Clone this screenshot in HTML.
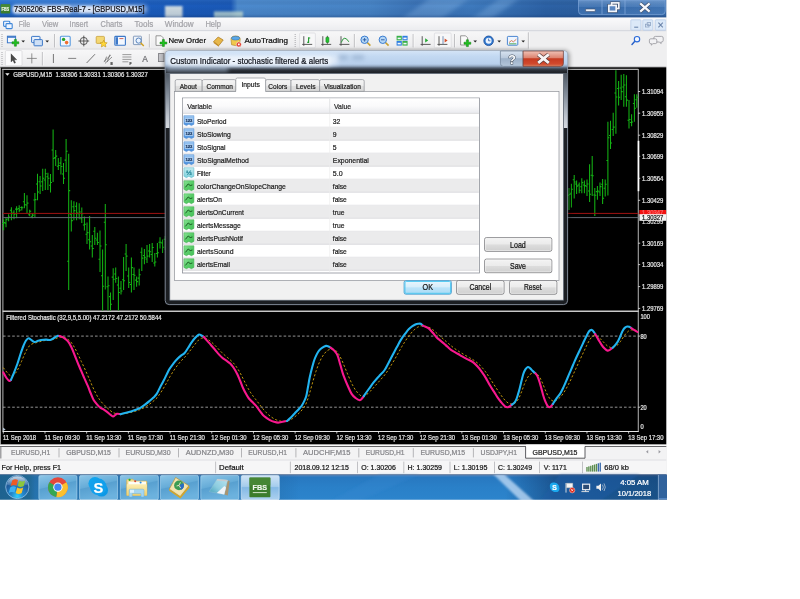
<!DOCTYPE html>
<html><head><meta charset="utf-8"><title>7305206: FBS-Real-7 - [GBPUSD,M15]</title>
<style>
html,body{margin:0;padding:0;background:#fff;width:800px;height:599px;overflow:hidden}
svg{display:block;position:absolute;left:0;top:0;font-family:"Liberation Sans",sans-serif}
text{white-space:pre}
</style></head><body>
<svg width="800" height="599" viewBox="0 0 800 599">
<defs>
<linearGradient id="tbH" x1="0" y1="0" x2="1" y2="0"><stop offset="0" stop-color="#1e66c8"/><stop offset="0.2" stop-color="#1b5ec0"/><stop offset="0.352" stop-color="#1a59b8"/><stop offset="0.362" stop-color="#4c8ace"/><stop offset="0.56" stop-color="#4784c6"/><stop offset="0.63" stop-color="#3a72b6"/><stop offset="0.71" stop-color="#3e7abe"/><stop offset="0.82" stop-color="#2c62a6"/><stop offset="0.9" stop-color="#2d60a0"/><stop offset="1" stop-color="#3a6eae"/></linearGradient>
<linearGradient id="tbV" x1="0" y1="0" x2="0" y2="1"><stop offset="0" stop-color="#1c3866" stop-opacity="0.5"/><stop offset="0.08" stop-color="#6fa6e2" stop-opacity="0.4"/><stop offset="0.22" stop-color="#5f98d8" stop-opacity="0.2"/><stop offset="0.5" stop-color="#000" stop-opacity="0"/><stop offset="0.85" stop-color="#0a2a5a" stop-opacity="0.1"/><stop offset="1" stop-color="#0a2050" stop-opacity="0.35"/></linearGradient>
<filter id="blur2" x="-20%" y="-50%" width="140%" height="200%"><feGaussianBlur stdDeviation="2"/></filter>
<filter id="blur1" x="-20%" y="-50%" width="140%" height="200%"><feGaussianBlur stdDeviation="1"/></filter>
<filter id="blur05" x="-20%" y="-20%" width="140%" height="140%"><feGaussianBlur stdDeviation="0.45"/></filter>
<filter id="blur4" x="-30%" y="-80%" width="160%" height="260%"><feGaussianBlur stdDeviation="4"/></filter>
<linearGradient id="wbG" x1="0" y1="0" x2="0" y2="1"><stop offset="0" stop-color="#9cc0ec" stop-opacity="0.5"/><stop offset="0.45" stop-color="#6f9fd6" stop-opacity="0.38"/><stop offset="0.5" stop-color="#4a80c0" stop-opacity="0.35"/><stop offset="1" stop-color="#5f94d2" stop-opacity="0.4"/></linearGradient>
<linearGradient id="mbG" x1="0" y1="0" x2="0" y2="1"><stop offset="0" stop-color="#fafafb"/><stop offset="0.5" stop-color="#f3f3f5"/><stop offset="1" stop-color="#eaebee"/></linearGradient>
<linearGradient id="tlG" x1="0" y1="0" x2="0" y2="1"><stop offset="0" stop-color="#f7f7f8"/><stop offset="0.5" stop-color="#f1f1f2"/><stop offset="1" stop-color="#ebebed"/></linearGradient>
<linearGradient id="tkV" x1="0" y1="0" x2="0" y2="1"><stop offset="0" stop-color="#54749c"/><stop offset="0.05" stop-color="#4a84c0"/><stop offset="0.1" stop-color="#2878c0"/><stop offset="0.5" stop-color="#2a80c8"/><stop offset="1" stop-color="#2c84cc"/></linearGradient>
<linearGradient id="tkR" x1="0" y1="0" x2="1" y2="0"><stop offset="0" stop-color="#0c2c5c" stop-opacity="0"/><stop offset="0.3" stop-color="#0c2c5c" stop-opacity="0.48"/><stop offset="1" stop-color="#0a2850" stop-opacity="0.56"/></linearGradient>
<linearGradient id="tkL" x1="0" y1="0" x2="1" y2="0"><stop offset="0" stop-color="#1d5f8c" stop-opacity="0.95"/><stop offset="0.115" stop-color="#20668f" stop-opacity="0.92"/><stop offset="0.135" stop-color="#22689a" stop-opacity="0.6"/><stop offset="0.9" stop-color="#2268a0" stop-opacity="0.4"/><stop offset="1" stop-color="#1e5c98" stop-opacity="0"/></linearGradient>
<linearGradient id="tbtn" x1="0" y1="0" x2="0.35" y2="1"><stop offset="0" stop-color="#9acdea"/><stop offset="0.1" stop-color="#84c0e4"/><stop offset="0.48" stop-color="#66acd8"/><stop offset="0.52" stop-color="#58a0d0"/><stop offset="1" stop-color="#6cb2de"/></linearGradient>
<linearGradient id="tbtnA" x1="0" y1="0" x2="0" y2="1"><stop offset="0" stop-color="#e4f1fd" stop-opacity="0.9"/><stop offset="0.45" stop-color="#bcdcf6" stop-opacity="0.85"/><stop offset="0.5" stop-color="#9ccaf0" stop-opacity="0.8"/><stop offset="1" stop-color="#c4e0f8" stop-opacity="0.85"/></linearGradient>
<radialGradient id="orb" cx="0.5" cy="0.9" r="0.85"><stop offset="0" stop-color="#30d0fc"/><stop offset="0.3" stop-color="#2488cc"/><stop offset="0.7" stop-color="#1f5c9c"/><stop offset="1" stop-color="#2c6ca8"/></radialGradient>
<linearGradient id="orbH" x1="0" y1="0" x2="0" y2="1"><stop offset="0" stop-color="#ffffff" stop-opacity="0.75"/><stop offset="1" stop-color="#ffffff" stop-opacity="0.05"/></linearGradient>
<linearGradient id="fold" x1="0" y1="0" x2="0" y2="1"><stop offset="0" stop-color="#fbeeb4"/><stop offset="1" stop-color="#f0d06c"/></linearGradient>
<linearGradient id="npad" x1="1" y1="0" x2="0" y2="1"><stop offset="0" stop-color="#b8e4f0"/><stop offset="0.55" stop-color="#8cccdf"/><stop offset="1" stop-color="#3c9cb8"/></linearGradient>
<linearGradient id="dlgF" x1="0" y1="0" x2="0" y2="1"><stop offset="0" stop-color="#c4d9f1"/><stop offset="0.045" stop-color="#b9d0ec"/><stop offset="0.058" stop-color="#a3b7cf"/><stop offset="0.066" stop-color="#525e6e"/><stop offset="0.076" stop-color="#262b32"/><stop offset="0.09" stop-color="#1e2126"/><stop offset="1" stop-color="#1b1e22"/></linearGradient>
<linearGradient id="dlgS" x1="0" y1="0" x2="0" y2="1"><stop offset="0" stop-color="#4e5762"/><stop offset="0.35" stop-color="#7d8794"/><stop offset="0.8" stop-color="#bfc5ce"/><stop offset="1" stop-color="#d6dae0"/></linearGradient>
<linearGradient id="dlgT" x1="0" y1="0" x2="0" y2="1"><stop offset="0" stop-color="#d4e4f7" stop-opacity="0.95"/><stop offset="0.25" stop-color="#c3d9f2" stop-opacity="0.9"/><stop offset="0.62" stop-color="#b9d0ec" stop-opacity="0.9"/><stop offset="0.72" stop-color="#93a8c2" stop-opacity="0.8"/><stop offset="0.85" stop-color="#4c5868" stop-opacity="0.25"/><stop offset="1" stop-color="#4c5868" stop-opacity="0.0"/></linearGradient>
<linearGradient id="qG" x1="0" y1="0" x2="0" y2="1"><stop offset="0" stop-color="#d9e4f1"/><stop offset="0.45" stop-color="#b9c9dc"/><stop offset="0.5" stop-color="#9db1c9"/><stop offset="1" stop-color="#b4c6da"/></linearGradient>
<linearGradient id="xG" x1="0" y1="0" x2="0" y2="1"><stop offset="0" stop-color="#f0c2b6"/><stop offset="0.45" stop-color="#dc826e"/><stop offset="0.5" stop-color="#c63a20"/><stop offset="0.85" stop-color="#d24a2e"/><stop offset="1" stop-color="#e08a66"/></linearGradient>
<linearGradient id="tabG" x1="0" y1="0" x2="0" y2="1"><stop offset="0" stop-color="#f6f6f6"/><stop offset="0.5" stop-color="#ececec"/><stop offset="0.51" stop-color="#e0e0e0"/><stop offset="1" stop-color="#d8d8d8"/></linearGradient>
<linearGradient id="hdrG" x1="0" y1="0" x2="0" y2="1"><stop offset="0" stop-color="#ffffff"/><stop offset="0.5" stop-color="#fafafb"/><stop offset="1" stop-color="#e9eaee"/></linearGradient>
<linearGradient id="icI" x1="0" y1="0" x2="0" y2="1"><stop offset="0" stop-color="#a4ccf4"/><stop offset="0.5" stop-color="#6aa8e8"/><stop offset="1" stop-color="#4a8edc"/></linearGradient>
<linearGradient id="icD" x1="0" y1="0" x2="0" y2="1"><stop offset="0" stop-color="#c4ecf0"/><stop offset="1" stop-color="#7cd0dc"/></linearGradient>
<linearGradient id="icB" x1="0" y1="0" x2="1" y2="1"><stop offset="0" stop-color="#8ce498"/><stop offset="0.5" stop-color="#58cc68"/><stop offset="1" stop-color="#44c058"/></linearGradient>
<linearGradient id="btnG" x1="0" y1="0" x2="0" y2="1"><stop offset="0" stop-color="#f4f4f4"/><stop offset="0.48" stop-color="#ebebeb"/><stop offset="0.52" stop-color="#dddddd"/><stop offset="1" stop-color="#cfcfcf"/></linearGradient>
<linearGradient id="btnD" x1="0" y1="0" x2="0" y2="1"><stop offset="0" stop-color="#eaf6fd"/><stop offset="0.48" stop-color="#d6eefb"/><stop offset="0.52" stop-color="#bce4fa"/><stop offset="1" stop-color="#a9daf4"/></linearGradient>
<filter id="softall" x="-10" y="-10" width="820" height="620" filterUnits="userSpaceOnUse" color-interpolation-filters="sRGB"><feGaussianBlur stdDeviation="0.38"/></filter>
<clipPath id="scr"><rect x="0" y="0" width="667.00" height="499.80"/></clipPath>
</defs>
<rect x="0" y="0" width="800" height="599" fill="#ffffff"/>
<g clip-path="url(#scr)"><g filter="url(#softall)">
<g id="titlebar">
<rect x="-6.00" y="-6.00" width="673.00" height="23.60" fill="url(#tbH)" />
<g filter="url(#blur2)">
<rect x="-6.00" y="-6.00" width="106.00" height="10.00" fill="#3f8ce6" opacity="0.6"/>
</g>
<g filter="url(#blur1)">
<rect x="165.00" y="6.00" width="17.50" height="12.00" fill="#eef2ea" opacity="0.85"/>
<rect x="214.00" y="11.50" width="29.00" height="7.00" fill="#d4ead8" opacity="0.75"/>
</g>
<g filter="url(#blur2)" opacity="0.35"><path d="M430 -2 L470 -2 L440 20 L400 20Z" fill="#8fc0f0"/><path d="M500 -2 L520 -2 L490 20 L470 20Z" fill="#8fc0f0"/></g>
<rect x="-6.00" y="-6.00" width="673.00" height="23.60" fill="url(#tbV)" />
<g filter="url(#blur2)" opacity="0.62">
<rect x="12.00" y="5.00" width="135.00" height="8.50" fill="#e8f0fb" rx="4" />
</g>
<g filter="url(#blur1)" opacity="0.72">
<rect x="13.00" y="5.50" width="58.00" height="8.00" fill="#ffffff" rx="3" />
<rect x="78.00" y="6.00" width="60.00" height="7.00" fill="#f4f8ff" rx="3" />
</g>
<rect x="0.60" y="4.20" width="9.60" height="9.40" fill="#3b7d2c" rx="0.8" />
<rect x="0.60" y="4.20" width="9.60" height="4.00" fill="#4c8f39" rx="0.8" opacity="0.7"/>
<text x="1.40" y="11.00" font-size="4.60" fill="#e8f2e2" textLength="7.80" lengthAdjust="spacingAndGlyphs" font-weight="bold" stroke="#e8f2e2" stroke-width="0.22" >FBS</text>
<text x="14.00" y="12.00" font-size="8.80" fill="#0c0c14" textLength="130.50" lengthAdjust="spacingAndGlyphs" stroke="#0c0c14" stroke-width="0.22" >7305206: FBS-Real-7 - [GBPUSD,M15]</text>
<path d="M578.5 0 H665.2 V11.2 Q665.2 14.6 661.8 14.6 H582 Q578.5 14.6 578.5 11.2 Z" fill="url(#wbG)" stroke="#7fa6da" stroke-width="0.7"/>
<line x1="602.00" y1="0.00" x2="602.00" y2="14.40" stroke="#86acde" stroke-width="0.7" />
<line x1="625.00" y1="0.00" x2="625.00" y2="14.40" stroke="#86acde" stroke-width="0.7" />
<rect x="585.60" y="9.00" width="9.60" height="2.60" fill="#f4f6fa" stroke="#3a4a66" stroke-width="0.6" rx="0.5" />
<g fill="none" stroke="#3a4a66" stroke-width="2.8"><rect x="611.6" y="2.9" width="7.2" height="5.6"/><rect x="608.8" y="5.4" width="7.4" height="6.0"/></g>
<g fill="none" stroke="#f4f6fa" stroke-width="1.7"><rect x="611.6" y="2.9" width="7.2" height="5.6"/></g><rect x="608.8" y="5.4" width="7.4" height="6.0" fill="#5a86c0" stroke="#f4f6fa" stroke-width="1.7"/>
<g stroke-linecap="butt"><path d="M640.2 3.4 L649.6 11.6 M649.6 3.4 L640.2 11.6" stroke="#3a4a66" stroke-width="3.6" fill="none"/><path d="M640.2 3.4 L649.6 11.6 M649.6 3.4 L640.2 11.6" stroke="#f6f8fc" stroke-width="2.3" fill="none"/></g>
</g>
<g id="menubar">
<rect x="-6.00" y="17.60" width="673.00" height="13.60" fill="url(#mbG)" />
<line x1="-6.00" y1="31.00" x2="667.00" y2="31.00" stroke="#b9bec8" stroke-width="0.8" />
<g fill="#eef5ff" stroke="#3f86d8" stroke-width="1.1"><rect x="3.6" y="21.2" width="6.2" height="5.2" rx="0.8"/><rect x="6.0" y="23.6" width="6.2" height="5.0" rx="0.8"/></g>
<text x="18.80" y="27.30" font-size="8.30" fill="#a3a3a8" textLength="11.20" lengthAdjust="spacingAndGlyphs" stroke="#a3a3a8" stroke-width="0.22" >File</text>
<text x="42.00" y="27.30" font-size="8.30" fill="#a3a3a8" textLength="16.20" lengthAdjust="spacingAndGlyphs" stroke="#a3a3a8" stroke-width="0.22" >View</text>
<text x="69.60" y="27.30" font-size="8.30" fill="#a3a3a8" textLength="18.60" lengthAdjust="spacingAndGlyphs" stroke="#a3a3a8" stroke-width="0.22" >Insert</text>
<text x="100.60" y="27.30" font-size="8.30" fill="#a3a3a8" textLength="21.80" lengthAdjust="spacingAndGlyphs" stroke="#a3a3a8" stroke-width="0.22" >Charts</text>
<text x="134.60" y="27.30" font-size="8.30" fill="#a3a3a8" textLength="18.80" lengthAdjust="spacingAndGlyphs" stroke="#a3a3a8" stroke-width="0.22" >Tools</text>
<text x="164.80" y="27.30" font-size="8.30" fill="#a3a3a8" textLength="28.80" lengthAdjust="spacingAndGlyphs" stroke="#a3a3a8" stroke-width="0.22" >Window</text>
<text x="205.40" y="27.30" font-size="8.30" fill="#a3a3a8" textLength="15.60" lengthAdjust="spacingAndGlyphs" stroke="#a3a3a8" stroke-width="0.22" >Help</text>
<rect x="630.80" y="19.80" width="10.20" height="10.40" fill="#dce9f8" stroke="#b3c9e6" stroke-width="0.7" rx="0.8" />
<rect x="642.80" y="19.80" width="10.00" height="10.40" fill="#dce9f8" stroke="#b3c9e6" stroke-width="0.7" rx="0.8" />
<rect x="655.20" y="19.80" width="10.80" height="10.40" fill="#dce9f8" stroke="#b3c9e6" stroke-width="0.7" rx="0.8" />
<line x1="634.20" y1="27.20" x2="638.20" y2="27.20" stroke="#6d86ac" stroke-width="1.1" />
<g fill="none" stroke="#8ea3c2" stroke-width="0.8"><rect x="647.2" y="22.6" width="3.4" height="2.8"/><rect x="645.6" y="24.2" width="3.4" height="2.8"/></g>
<path d="M658.4 22.6 L662.8 27.4 M662.8 22.6 L658.4 27.4" stroke="#6d86ac" stroke-width="1.1" fill="none"/>
</g>
<g id="toolbars">
<rect x="-6.00" y="31.40" width="673.00" height="36.00" fill="#efeff0" />
<rect x="-6.00" y="31.40" width="535.00" height="18.00" fill="url(#tlG)" />
<line x1="-6.00" y1="49.20" x2="529.00" y2="49.20" stroke="#c9c9cc" stroke-width="0.7" />
<rect x="-6.00" y="49.60" width="535.00" height="17.60" fill="url(#tlG)" />
<line x1="-6.00" y1="66.90" x2="667.00" y2="66.90" stroke="#a9a9ad" stroke-width="0.8" />
<line x1="2.00" y1="34.00" x2="2.00" y2="47.40" stroke="#b4b4b8" stroke-width="1.2" stroke-dasharray="1 1"/>
<line x1="2.00" y1="52.00" x2="2.00" y2="65.00" stroke="#b4b4b8" stroke-width="1.2" stroke-dasharray="1 1"/>
<g><rect x="7.4" y="36.2" width="8.2" height="6.6" fill="#f3f8ff" stroke="#3c78c8" stroke-width="1"/><rect x="7.4" y="36.2" width="8.2" height="1.6" fill="#3c78c8"/><path d="M12 41.8 h2.4 v-2.4 h2 v2.4 h2.4 v2 h-2.4 v2.4 h-2 v-2.4 h-2.4 z" fill="#1fc21f" stroke="#0c7a0c" stroke-width="0.5"/></g>
<path d="M21.40 40.40 h3.6 l-1.8 2.2 z" fill="#222"/>
<g fill="#eaf2fc" stroke="#3c78c8" stroke-width="1"><rect x="31.6" y="36.4" width="8.4" height="6.2" rx="0.6"/><rect x="34.0" y="39.6" width="8.4" height="6.2" rx="0.6" fill="#cfe0f6"/></g>
<path d="M45.40 40.40 h3.6 l-1.8 2.2 z" fill="#222"/>
<line x1="54.60" y1="34.00" x2="54.60" y2="47.40" stroke="#a8a8ac" stroke-width="0.8" />
<line x1="55.40" y1="34.00" x2="55.40" y2="47.40" stroke="#ffffff" stroke-width="0.6" />
<g><rect x="60.4" y="36.2" width="9.8" height="9.8" rx="1" fill="#f1f7ff" stroke="#5a9be0" stroke-width="1.1"/><circle cx="63.6" cy="39.4" r="1.7" fill="#28a428"/><circle cx="66.6" cy="42.6" r="1.8" fill="#f07030"/></g>
<g fill="none" stroke="#4a4a4a" stroke-width="0.9"><circle cx="83.8" cy="41" r="3.6"/><path d="M83.8 35.6 v10.8 M78.4 41 h10.8"/></g>
<g><rect x="96.2" y="36.4" width="8.2" height="7" rx="0.8" fill="#f4d873" stroke="#c49a2c" stroke-width="0.7"/><path d="M103.6 40.2 l1.1 2.3 2.5 0.3 -1.8 1.7 0.5 2.5 -2.3 -1.2 -2.3 1.2 0.5 -2.5 -1.8 -1.7 2.5 -0.3z" fill="#ffd83a" stroke="#b8860b" stroke-width="0.5"/></g>
<g><rect x="114.8" y="36.4" width="10.6" height="8.8" rx="0.8" fill="#f3f8ff" stroke="#3c78c8" stroke-width="1.1"/><rect x="115.6" y="37.2" width="2.4" height="7.4" fill="#3c78c8"/><path d="M119.4 38.6 h4" stroke="#c03a30" stroke-width="0.8"/></g>
<g><rect x="133.4" y="36.2" width="8" height="8.4" rx="0.6" fill="#eef3fa" stroke="#7a94b8" stroke-width="0.9"/><circle cx="138.6" cy="40.6" r="2.6" fill="#e8f2ff" stroke="#4a78b4" stroke-width="0.9"/><path d="M140.6 42.8 l3.2 3.2" stroke="#d0a020" stroke-width="1.4"/></g>
<line x1="149.40" y1="34.00" x2="149.40" y2="47.40" stroke="#a8a8ac" stroke-width="0.8" />
<line x1="150.20" y1="34.00" x2="150.20" y2="47.40" stroke="#ffffff" stroke-width="0.6" />
<g><path d="M156 35.8 h5.2 l2 2 v7.6 h-7.2 z" fill="#fafafa" stroke="#707070" stroke-width="0.7"/><path d="M160 42 h2.4 v-2.4 h2 v2.4 h2.4 v2 h-2.4 v2.4 h-2 v-2.4 h-2.4 z" fill="#1fc21f" stroke="#0c7a0c" stroke-width="0.5"/></g>
<text x="168.40" y="42.50" font-size="7.60" fill="#101010" textLength="37.60" lengthAdjust="spacingAndGlyphs" stroke="#101010" stroke-width="0.22" >New Order</text>
<g><path d="M213.6 41.6 l4.6 -4.6 5 3 -4.4 5.6 z" fill="#e8b84a" stroke="#a87416" stroke-width="0.7"/><path d="M213.6 41.6 l5.2 4 v1.2 l-5.2 -3.8 z" fill="#c48a20"/></g>
<g><path d="M231 39.4 q0 -3.4 4.6 -3.4 q4.6 0 4.6 3.4 l-0.6 5.4 q-4 1.6 -8 0z" fill="#f0c84a" stroke="#a88020" stroke-width="0.6"/><ellipse cx="235.6" cy="38.2" rx="4.2" ry="1.9" fill="#5aa8e8" stroke="#2c6cb0" stroke-width="0.5"/><circle cx="238.8" cy="44.4" r="2.5" fill="#e03020" stroke="#fff" stroke-width="0.5"/><rect x="237.9" y="43.5" width="1.8" height="1.8" fill="#fff"/></g>
<text x="244.40" y="42.50" font-size="7.60" fill="#101010" textLength="43.60" lengthAdjust="spacingAndGlyphs" stroke="#101010" stroke-width="0.22" >AutoTrading</text>
<line x1="295.20" y1="34.00" x2="295.20" y2="47.40" stroke="#b4b4b8" stroke-width="1.2" stroke-dasharray="1 1"/>
<rect x="299.60" y="33.00" width="15.80" height="14.80" fill="#f7f7f8" stroke="#d4d4d8" stroke-width="0.6" rx="1" />
<path d="M303.80 36.20 v9.6 M302.20 44.4 h10" stroke="#4a4a4a" stroke-width="0.9" fill="none"/>
<path d="M308.6 37.2 v5.8 M308.6 38 h1.6 M308.6 42.2 h-1.6" stroke="#1f9a2c" stroke-width="1.1" fill="none"/>
<path d="M322.80 36.20 v9.6 M321.20 44.4 h10" stroke="#4a4a4a" stroke-width="0.9" fill="none"/>
<path d="M327.4 35.8 v8" stroke="#222" stroke-width="0.7"/><rect x="325.9" y="37.2" width="3" height="5.2" rx="0.6" fill="#22c232" stroke="#157a15" stroke-width="0.5"/>
<path d="M341.00 36.20 v9.6 M339.40 44.4 h10" stroke="#4a4a4a" stroke-width="0.9" fill="none"/>
<path d="M341.2 42.6 q1.6 -4.6 3.6 -4.4 q2 0.2 4 3.6" stroke="#2c9a3c" stroke-width="1.0" fill="none"/>
<line x1="354.40" y1="34.00" x2="354.40" y2="47.40" stroke="#a8a8ac" stroke-width="0.8" />
<line x1="355.20" y1="34.00" x2="355.20" y2="47.40" stroke="#ffffff" stroke-width="0.6" />
<g><path d="M367.00 42.20 l3.4 3.4" stroke="#c8a030" stroke-width="1.6"/><circle cx="364.60" cy="39.80" r="3.7" fill="#b4d6f6" stroke="#3a7cd0" stroke-width="1"/><path d="M362.80 39.80 h3.6" stroke="#2a5aa0" stroke-width="0.9"/>
<path d="M364.60 38.00 v3.6" stroke="#2a5aa0" stroke-width="0.9"/>
</g>
<g><path d="M385.20 42.20 l3.4 3.4" stroke="#c8a030" stroke-width="1.6"/><circle cx="382.80" cy="39.80" r="3.7" fill="#b4d6f6" stroke="#3a7cd0" stroke-width="1"/><path d="M381.00 39.80 h3.6" stroke="#2a5aa0" stroke-width="0.9"/>
</g>
<g stroke-width="0"><rect x="396.6" y="35.8" width="5.2" height="4.6" fill="#38b048"/><rect x="402.4" y="35.8" width="5.2" height="4.6" fill="#2f7ee0"/><rect x="396.6" y="41" width="5.2" height="4.6" fill="#2f7ee0"/><rect x="402.4" y="41" width="5.2" height="4.6" fill="#38b048"/><g fill="#f4f8fc"><rect x="397.6" y="37.6" width="3.2" height="1.6"/><rect x="403.4" y="37.6" width="3.2" height="1.6"/><rect x="397.6" y="42.8" width="3.2" height="1.6"/><rect x="403.4" y="42.8" width="3.2" height="1.6"/></g></g>
<line x1="413.20" y1="34.00" x2="413.20" y2="47.40" stroke="#a8a8ac" stroke-width="0.8" />
<line x1="414.00" y1="34.00" x2="414.00" y2="47.40" stroke="#ffffff" stroke-width="0.6" />
<path d="M422.20 36.20 v9.6 M420.60 44.4 h10" stroke="#4a4a4a" stroke-width="0.9" fill="none"/>
<path d="M425.2 38.2 l3 2.2 -3 2.2z" fill="#22a832"/>
<rect x="434.40" y="33.00" width="16.80" height="14.80" fill="#f7f7f8" stroke="#d4d4d8" stroke-width="0.6" rx="1" />
<path d="M439.00 36.20 v9.6 M437.40 44.4 h10" stroke="#4a4a4a" stroke-width="0.9" fill="none"/>
<path d="M443.0 36.2 v8" stroke="#6a86b0" stroke-width="0.9"/><path d="M444.6 38.4 l3 2 -3 2z" fill="#d4502c"/>
<line x1="454.60" y1="34.00" x2="454.60" y2="47.40" stroke="#a8a8ac" stroke-width="0.8" />
<line x1="455.40" y1="34.00" x2="455.40" y2="47.40" stroke="#ffffff" stroke-width="0.6" />
<g><path d="M460.6 35.8 h5 l2 2 v7.2 h-7 z" fill="#fafafa" stroke="#707070" stroke-width="0.7"/><path d="M464 42.2 h2.4 v-2.4 h2 v2.4 h2.4 v2 h-2.4 v2.4 h-2 v-2.4 h-2.4 z" fill="#1fc21f" stroke="#0c7a0c" stroke-width="0.5"/></g>
<path d="M473.40 40.40 h3.6 l-1.8 2.2 z" fill="#222"/>
<g><circle cx="488.6" cy="40.8" r="4.8" fill="#2f78d0" stroke="#1a4c98" stroke-width="0.8"/><circle cx="488.6" cy="40.8" r="3" fill="#eaf3ff"/><path d="M488.6 38.6 v2.2 h1.8" stroke="#1a4c98" stroke-width="0.7" fill="none"/></g>
<path d="M497.40 40.40 h3.6 l-1.8 2.2 z" fill="#222"/>
<g><rect x="507.4" y="36.4" width="10.4" height="8.8" rx="0.8" fill="#eef5ff" stroke="#4a86d0" stroke-width="1"/><path d="M509 42.6 l2.4 -2 2 1.2 3 -2.6" stroke="#d06030" stroke-width="0.8" fill="none"/><path d="M509 43.8 h7.4" stroke="#38a038" stroke-width="0.8"/></g>
<path d="M521.40 40.40 h3.6 l-1.8 2.2 z" fill="#222"/>
<line x1="528.40" y1="32.40" x2="528.40" y2="48.40" stroke="#a8a8ac" stroke-width="0.8" />
<line x1="529.20" y1="32.40" x2="529.20" y2="48.40" stroke="#ffffff" stroke-width="0.6" />
<g><path d="M634.6 41.6 l-2.6 2.8" stroke="#2a62c8" stroke-width="1.5" stroke-linecap="round"/><circle cx="637.0" cy="39.2" r="2.7" fill="#f4f8ff" stroke="#2a6ad8" stroke-width="1.1"/></g>
<g fill="#f2f2f4" stroke="#8a8a90" stroke-width="0.7"><path d="M655.4 36.4 h6.2 q1.6 0 1.6 1.6 v2.4 q0 1.6 -1.6 1.6 h-0.8 l0.4 1.6 -2 -1.6 h-3.8 q-1.6 0 -1.6 -1.6 v-2.4 q0 -1.6 1.6 -1.6z"/><path d="M650.8 38.8 h4.6 q1.4 0 1.4 1.4 v2 q0 1.4 -1.4 1.4 h-2.4 l-1.8 1.6 0.2 -1.6 h-0.6 q-1.4 0 -1.4 -1.4 v-2 q0 -1.4 1.4 -1.4z"/></g>
<rect x="5.40" y="50.60" width="16.60" height="15.20" fill="#fbfbfc" stroke="#d0d0d4" stroke-width="0.6" rx="1" />
<path d="M11 53.8 v8.2 l1.9 -1.7 1.4 3 1.3 -0.6 -1.4 -2.9 h2.6z" fill="#4a4a4a" stroke="#2a2a2a" stroke-width="0.3"/>
<path d="M31.8 53.4 v10 M26.8 58.4 h10" stroke="#777" stroke-width="0.8" fill="none"/>
<line x1="42.40" y1="52.00" x2="42.40" y2="65.40" stroke="#a8a8ac" stroke-width="0.8" />
<line x1="43.20" y1="52.00" x2="43.20" y2="65.40" stroke="#ffffff" stroke-width="0.6" />
<line x1="53.40" y1="54.00" x2="53.40" y2="63.00" stroke="#666" stroke-width="0.9" />
<line x1="68.20" y1="58.40" x2="76.20" y2="58.40" stroke="#777" stroke-width="0.9" />
<line x1="86.60" y1="63.00" x2="95.00" y2="54.20" stroke="#666" stroke-width="0.9" />
<g stroke="#666" stroke-width="0.7" fill="none"><path d="M103.8 61.6 l7 -6.4 M105 63.4 l7 -6.4 M106.6 56.6 l-2 5.4 M109.8 54.6 l-2.6 7.4"/></g>
<text x="110.60" y="64.60" font-size="3.60" fill="#444" font-weight="bold" stroke="#444" stroke-width="0.22" >E</text>
<g stroke="#777" stroke-width="0.7" fill="none"><path d="M122.4 54.6 h9 M122.4 57 h9 M122.4 59.4 h9 M122.4 61.8 h6"/></g>
<text x="129.60" y="65.00" font-size="3.40" fill="#444" font-weight="bold" stroke="#444" stroke-width="0.22" >F</text>
<text x="142.20" y="62.00" font-size="8.40" fill="#6e6e72" textLength="5.60" lengthAdjust="spacingAndGlyphs" stroke="#6e6e72" stroke-width="0.22" >A</text>
<rect x="158.40" y="53.60" width="5.60" height="8.00" fill="#c4c4c8" stroke="#77777c" stroke-width="0.8" />
</g>
<g id="chart">
<rect x="-6.00" y="67.30" width="673.00" height="377.50" fill="#000000" />
<line x1="0.45" y1="67.40" x2="0.45" y2="444.60" stroke="#a4a4a4" stroke-width="1.0" />
<line x1="2.80" y1="69.00" x2="2.80" y2="431.60" stroke="#6e6e6e" stroke-width="1.7" />
<line x1="2.20" y1="69.40" x2="638.30" y2="69.40" stroke="#b0b0b0" stroke-width="1.1" />
<line x1="638.30" y1="69.00" x2="638.30" y2="431.60" stroke="#a6a6a6" stroke-width="1.1" />
<line x1="638.50" y1="140.80" x2="638.50" y2="191.20" stroke="#ffffff" stroke-width="1.7" />
<line x1="2.60" y1="311.20" x2="638.80" y2="311.20" stroke="#c8c8c8" stroke-width="1.4" />
<line x1="2.60" y1="431.50" x2="638.80" y2="431.50" stroke="#e4e4e4" stroke-width="1.1" />
<g stroke="#14b414" stroke-width="1.05" fill="none">
<path d="M3.6 219.2V230.2M3.6 223.5h-1.5M3.6 222.4h1.5M6.0 217.2V227.2M6.0 223.1h-1.5M6.0 219.6h1.5M8.6 214.2V221.2M8.6 217.9h-1.5M8.6 217.1h1.5M11.4 207.2V220.2M11.4 210.3h-1.5M11.4 213.8h1.5M14.0 210.2V219.2M14.0 212.2h-1.5M14.0 214.3h1.5M16.6 206.2V218.2M16.6 209.1h-1.5M16.6 209.3h1.5M19.2 205.2V212.2M19.2 208.4h-1.5M19.2 210.1h1.5M21.8 206.2V210.6M21.8 207.4h-1.5M21.8 207.7h1.5M24.4 193.1V208.2M24.4 201.8h-1.5M24.4 204.7h1.5M27.0 195.2V213.2M27.0 205.0h-1.5M27.0 203.1h1.5M29.7 209.8V216.2M29.7 214.8h-1.5M29.7 211.3h1.5M32.3 213.2V218.2M32.3 216.8h-1.5M32.3 215.1h1.5M34.9 193.1V217.2M34.9 200.0h-1.5M34.9 199.6h1.5M37.5 173.7V200.2M37.5 183.9h-1.5M37.5 192.0h1.5M40.1 176.1V194.1M40.1 181.7h-1.5M40.1 186.0h1.5M42.7 168.7V191.1M42.7 181.8h-1.5M42.7 178.2h1.5M45.3 168.7V190.1M45.3 180.0h-1.5M45.3 173.8h1.5M47.9 172.7V190.1M47.9 176.8h-1.5M47.9 178.3h1.5M50.5 174.1V192.5M50.5 185.3h-1.5M50.5 182.5h1.5M53.1 129.4V182.1M53.1 149.9h-1.5M53.1 158.5h1.5M55.7 150.0V166.1M55.7 157.6h-1.5M55.7 156.1h1.5M58.3 158.0V170.1M58.3 166.2h-1.5M58.3 165.5h1.5M60.9 157.0V174.5M60.9 163.1h-1.5M60.9 166.5h1.5M63.5 163.0V184.1M63.5 173.9h-1.5M63.5 178.3h1.5M66.1 139.0V172.1M66.1 160.1h-1.5M66.1 151.3h1.5M68.7 153.7V290.1M68.7 261.2h-1.5M68.7 190.6h1.5M71.3 200.2V231.4M71.3 214.3h-1.5M71.3 220.6h1.5M73.9 201.2V220.2M73.9 206.7h-1.5M73.9 210.6h1.5M76.6 202.2V220.2M76.6 206.2h-1.5M76.6 213.0h1.5M79.2 203.2V219.2M79.2 213.7h-1.5M79.2 211.9h1.5M81.8 207.6V223.0M81.8 218.8h-1.5M81.8 213.6h1.5M84.4 216.4V230.4M84.4 225.0h-1.5M84.4 224.2h1.5M87.0 222.4V244.0M87.0 234.2h-1.5M87.0 232.6h1.5M89.6 216.0V249.6M89.6 239.7h-1.5M89.6 241.8h1.5M92.3 235.0V257.5M92.3 245.9h-1.5M92.3 248.5h1.5M94.8 227.0V245.0M94.8 231.3h-1.5M94.8 238.2h1.5M97.4 232.8V245.0M97.4 240.0h-1.5M97.4 242.5h1.5M100.0 230.5V272.0M100.0 259.3h-1.5M100.0 245.9h1.5M102.6 249.6V310.4M102.6 275.8h-1.5M102.6 286.2h1.5M105.3 204.0V289.4M105.3 222.2h-1.5M105.3 244.7h1.5M108.0 276.6V310.4M108.0 286.8h-1.5M108.0 285.7h1.5M110.5 292.4V310.4M110.5 296.6h-1.5M110.5 304.3h1.5M113.2 268.3V300.0M113.2 277.1h-1.5M113.2 279.3h1.5M115.7 267.4V282.7M115.7 274.0h-1.5M115.7 278.5h1.5M118.4 276.6V310.4M118.4 285.0h-1.5M118.4 292.5h1.5M121.0 281.0V294.6M121.0 288.2h-1.5M121.0 290.9h1.5M123.6 257.0V290.0M123.6 279.8h-1.5M123.6 280.7h1.5M126.1 244.0V271.0M126.1 253.9h-1.5M126.1 256.1h1.5M128.7 267.6V287.9M128.7 276.0h-1.5M128.7 282.4h1.5M131.4 257.5V292.4M131.4 284.5h-1.5M131.4 267.6h1.5M134.0 267.6V290.0M134.0 274.4h-1.5M134.0 275.2h1.5M136.6 276.6V286.8M136.6 280.1h-1.5M136.6 281.6h1.5M139.2 268.8V285.6M139.2 278.1h-1.5M139.2 274.8h1.5M141.8 247.4V271.0M141.8 252.2h-1.5M141.8 258.1h1.5M144.4 249.0V264.3M144.4 255.4h-1.5M144.4 257.3h1.5M147.0 245.0V263.0M147.0 258.9h-1.5M147.0 256.1h1.5M149.6 244.0V257.5M149.6 250.9h-1.5M149.6 251.7h1.5M152.2 243.0V262.0M152.2 254.5h-1.5M152.2 247.4h1.5M154.8 253.0V266.5M154.8 263.0h-1.5M154.8 262.0h1.5M157.4 243.0V257.5M157.4 253.5h-1.5M157.4 252.8h1.5M160.0 237.3V248.5M160.0 242.2h-1.5M160.0 242.2h1.5M162.6 239.5V253.0M162.6 243.0h-1.5M162.6 247.3h1.5M165.2 236.0V250.0M165.2 239.3h-1.5M165.2 239.4h1.5M569.0 188.0V210.0M569.0 195.2h-1.5M569.0 194.5h1.5M571.4 183.7V207.4M571.4 193.3h-1.5M571.4 189.2h1.5M574.2 175.0V198.6M574.2 179.7h-1.5M574.2 181.9h1.5M576.6 180.4V194.0M576.6 183.9h-1.5M576.6 186.1h1.5M579.2 182.6V193.2M579.2 184.9h-1.5M579.2 190.3h1.5M581.8 178.3V193.2M581.8 186.8h-1.5M581.8 182.6h1.5M584.4 180.4V193.2M584.4 184.9h-1.5M584.4 185.6h1.5M587.0 179.4V196.0M587.0 186.3h-1.5M587.0 183.9h1.5M589.6 164.2V202.0M589.6 191.0h-1.5M589.6 194.3h1.5M592.2 156.1V196.0M592.2 175.2h-1.5M592.2 175.7h1.5M594.8 188.0V216.0M594.8 195.0h-1.5M594.8 195.3h1.5M597.4 186.0V199.8M597.4 191.6h-1.5M597.4 191.0h1.5M600.0 182.6V196.0M600.0 191.9h-1.5M600.0 186.6h1.5M602.6 179.0V204.0M602.6 184.3h-1.5M602.6 198.3h1.5M605.2 179.4V196.5M605.2 188.2h-1.5M605.2 184.3h1.5M607.9 121.8V195.4M607.9 160.5h-1.5M607.9 137.7h1.5M610.5 120.8V149.0M610.5 135.4h-1.5M610.5 143.0h1.5M613.2 112.7V136.0M613.2 129.4h-1.5M613.2 127.1h1.5M615.9 70.2V133.8M615.9 92.9h-1.5M615.9 96.9h1.5M618.6 81.0V105.6M618.6 88.4h-1.5M618.6 97.3h1.5M621.2 74.8V100.0M621.2 87.9h-1.5M621.2 91.6h1.5M623.8 74.0V106.7M623.8 87.0h-1.5M623.8 84.9h1.5M626.4 75.2V106.7M626.4 96.8h-1.5M626.4 100.1h1.5M629.0 100.0V128.4M629.0 120.2h-1.5M629.0 119.4h1.5M631.6 114.3V126.2M631.6 122.5h-1.5M631.6 122.0h1.5M634.4 94.3V121.8M634.4 103.5h-1.5M634.4 108.3h1.5M636.8 94.3V107.7M636.8 99.8h-1.5M636.8 97.2h1.5"/>
</g>
<line x1="3.00" y1="213.40" x2="638.30" y2="213.40" stroke="#a01212" stroke-width="1.0" />
<line x1="3.00" y1="217.60" x2="638.30" y2="217.60" stroke="#646a74" stroke-width="1.0" />
<path d="M5.2 73.2 h4.4 l-2.2 2.6z" fill="#f0f0f0"/>
<text x="13.20" y="77.40" font-size="6.90" fill="#e6e6e6" textLength="134.60" lengthAdjust="spacingAndGlyphs" stroke="#e6e6e6" stroke-width="0.22" >GBPUSD,M15  1.30306 1.30331 1.30306 1.30327</text>
<text x="642.00" y="224.00" font-size="6.50" fill="#d8d8d8" textLength="21.40" lengthAdjust="spacingAndGlyphs" stroke="#d8d8d8" stroke-width="0.22" >1.30299</text>
<line x1="638.30" y1="91.50" x2="640.20" y2="91.50" stroke="#f0f0f0" stroke-width="0.8" />
<text x="642.00" y="93.80" font-size="6.50" fill="#e4e4e4" textLength="21.40" lengthAdjust="spacingAndGlyphs" stroke="#e4e4e4" stroke-width="0.22" >1.31094</text>
<line x1="638.30" y1="113.20" x2="640.20" y2="113.20" stroke="#f0f0f0" stroke-width="0.8" />
<text x="642.00" y="115.50" font-size="6.50" fill="#e4e4e4" textLength="21.40" lengthAdjust="spacingAndGlyphs" stroke="#e4e4e4" stroke-width="0.22" >1.30959</text>
<line x1="638.30" y1="135.20" x2="640.20" y2="135.20" stroke="#f0f0f0" stroke-width="0.8" />
<text x="642.00" y="137.50" font-size="6.50" fill="#e4e4e4" textLength="21.40" lengthAdjust="spacingAndGlyphs" stroke="#e4e4e4" stroke-width="0.22" >1.30829</text>
<line x1="638.30" y1="156.30" x2="640.20" y2="156.30" stroke="#f0f0f0" stroke-width="0.8" />
<text x="642.00" y="158.60" font-size="6.50" fill="#e4e4e4" textLength="21.40" lengthAdjust="spacingAndGlyphs" stroke="#e4e4e4" stroke-width="0.22" >1.30699</text>
<line x1="638.30" y1="178.30" x2="640.20" y2="178.30" stroke="#f0f0f0" stroke-width="0.8" />
<text x="642.00" y="180.60" font-size="6.50" fill="#e4e4e4" textLength="21.40" lengthAdjust="spacingAndGlyphs" stroke="#e4e4e4" stroke-width="0.22" >1.30564</text>
<line x1="638.30" y1="200.30" x2="640.20" y2="200.30" stroke="#f0f0f0" stroke-width="0.8" />
<text x="642.00" y="202.60" font-size="6.50" fill="#e4e4e4" textLength="21.40" lengthAdjust="spacingAndGlyphs" stroke="#e4e4e4" stroke-width="0.22" >1.30429</text>
<line x1="638.30" y1="243.20" x2="640.20" y2="243.20" stroke="#f0f0f0" stroke-width="0.8" />
<text x="642.00" y="245.50" font-size="6.50" fill="#e4e4e4" textLength="21.40" lengthAdjust="spacingAndGlyphs" stroke="#e4e4e4" stroke-width="0.22" >1.30169</text>
<line x1="638.30" y1="264.60" x2="640.20" y2="264.60" stroke="#f0f0f0" stroke-width="0.8" />
<text x="642.00" y="266.90" font-size="6.50" fill="#e4e4e4" textLength="21.40" lengthAdjust="spacingAndGlyphs" stroke="#e4e4e4" stroke-width="0.22" >1.30034</text>
<line x1="638.30" y1="286.60" x2="640.20" y2="286.60" stroke="#f0f0f0" stroke-width="0.8" />
<text x="642.00" y="288.90" font-size="6.50" fill="#e4e4e4" textLength="21.40" lengthAdjust="spacingAndGlyphs" stroke="#e4e4e4" stroke-width="0.22" >1.29899</text>
<line x1="638.30" y1="308.40" x2="640.20" y2="308.40" stroke="#f0f0f0" stroke-width="0.8" />
<text x="642.00" y="310.70" font-size="6.50" fill="#e4e4e4" textLength="21.40" lengthAdjust="spacingAndGlyphs" stroke="#e4e4e4" stroke-width="0.22" >1.29769</text>
<rect x="639.40" y="210.00" width="27.00" height="5.60" fill="#f01010" />
<text x="642.00" y="215.00" font-size="6.50" fill="#ff9090" textLength="21.40" lengthAdjust="spacingAndGlyphs" opacity="0.7" stroke="#ff9090" stroke-width="0.22" >1.30347</text>
<rect x="639.40" y="214.20" width="27.00" height="6.60" fill="#f4f4f4" />
<text x="642.00" y="219.90" font-size="6.50" fill="#101010" textLength="21.40" lengthAdjust="spacingAndGlyphs" stroke="#101010" stroke-width="0.22" >1.30327</text>
<text x="6.20" y="320.10" font-size="6.60" fill="#e6e6e6" textLength="155.40" lengthAdjust="spacingAndGlyphs" stroke="#e6e6e6" stroke-width="0.22" >Filtered Stochastic (32,9,5,5.00) 47.2172 47.2172 50.5844</text>
<line x1="3" y1="336.1" x2="638" y2="336.1" stroke="#c4c4c4" stroke-width="0.75" stroke-dasharray="2.6 2"/>
<line x1="3" y1="407.2" x2="638" y2="407.2" stroke="#c4c4c4" stroke-width="0.75" stroke-dasharray="2.6 2"/>
<text x="640.40" y="318.90" font-size="6.60" fill="#e4e4e4" textLength="9.60" lengthAdjust="spacingAndGlyphs" stroke="#e4e4e4" stroke-width="0.22" >100</text>
<text x="640.40" y="339.00" font-size="6.60" fill="#e4e4e4" textLength="6.30" lengthAdjust="spacingAndGlyphs" stroke="#e4e4e4" stroke-width="0.22" >80</text>
<text x="640.40" y="410.00" font-size="6.60" fill="#e4e4e4" textLength="6.30" lengthAdjust="spacingAndGlyphs" stroke="#e4e4e4" stroke-width="0.22" >20</text>
<text x="640.40" y="429.40" font-size="6.60" fill="#e4e4e4" textLength="3.20" lengthAdjust="spacingAndGlyphs" stroke="#e4e4e4" stroke-width="0.22" >0</text>
<line x1="638.30" y1="336.10" x2="640.20" y2="336.10" stroke="#f0f0f0" stroke-width="0.8" />
<line x1="638.30" y1="407.20" x2="640.20" y2="407.20" stroke="#f0f0f0" stroke-width="0.8" />
<path d="M3.3 367.6 L5.9 371.0 L8.5 374.2 L11.1 376.2 L13.7 375.2 L16.3 372.1 L18.9 367.4 L21.5 361.5 L24.1 355.4 L26.7 349.8 L29.4 345.8 L32.0 343.9 L34.6 343.2 L37.2 342.4 L39.8 341.7 L42.4 341.0 L45.0 340.5 L47.6 340.3 L50.2 340.2 L52.8 339.6 L55.4 338.7 L58.0 337.7 L60.6 337.3 L63.2 337.3 L65.8 338.1 L68.4 339.6 L71.0 342.1 L73.6 345.9 L76.2 350.6 L78.8 356.0 L81.4 361.6 L84.1 367.3 L86.7 373.1 L89.3 379.0 L91.9 385.1 L94.5 390.8 L97.1 395.8 L99.7 399.8 L102.3 403.0 L104.9 405.7 L107.5 408.1 L110.1 410.4 L112.7 412.5 L115.3 413.4 L117.9 413.5 L120.5 413.8 L123.1 413.7 L125.7 413.4 L128.3 412.9 L130.9 412.4 L133.6 411.7 L136.2 411.0 L138.8 410.1 L141.4 409.1 L144.0 407.7 L146.6 406.1 L149.2 404.4 L151.8 402.5 L154.4 400.3 L157.0 397.8 L159.6 394.3 L162.2 390.4 L164.8 386.0 L167.4 381.4 L170.0 376.6 L172.6 372.3 L175.2 368.4 L177.8 364.8 L180.4 361.7 L183.0 359.0 L185.6 356.3 L188.3 353.1 L190.9 349.7 L193.5 346.2 L196.1 342.9 L198.7 339.9 L201.3 338.3 L203.9 337.9 L206.5 338.7 L209.1 340.2 L211.7 342.3 L214.3 344.7 L216.9 347.3 L219.5 350.1 L222.1 352.8 L224.7 355.2 L227.3 357.4 L229.9 359.6 L232.5 362.0 L235.1 365.0 L237.7 368.7 L240.4 373.3 L243.0 378.5 L245.6 383.7 L248.2 388.6 L250.8 392.9 L253.4 396.5 L256.0 399.8 L258.6 403.2 L261.2 406.6 L263.8 409.9 L266.4 412.7 L269.0 415.2 L271.6 417.2 L274.2 418.9 L276.8 420.1 L279.4 420.9 L282.0 421.3 L284.6 421.3 L287.2 421.1 L289.8 420.2 L292.5 418.6 L295.1 416.6 L297.7 414.4 L300.3 411.9 L302.9 408.9 L305.5 405.0 L308.1 398.3 L310.7 389.4 L313.3 380.0 L315.9 371.5 L318.5 364.3 L321.1 358.7 L323.7 354.5 L326.3 351.4 L328.9 349.7 L331.5 349.2 L334.1 349.7 L336.7 351.3 L339.3 355.0 L342.0 360.5 L344.6 366.8 L347.2 373.1 L349.8 379.2 L352.4 384.8 L355.0 389.3 L357.6 392.8 L360.2 395.4 L362.8 396.2 L365.4 395.3 L368.0 393.5 L370.6 391.0 L373.2 388.1 L375.8 385.1 L378.4 382.2 L381.0 379.2 L383.6 376.3 L386.2 373.0 L388.8 369.2 L391.4 364.9 L394.1 360.4 L396.7 355.8 L399.3 351.1 L401.9 346.5 L404.5 342.3 L407.1 338.3 L409.7 334.8 L412.3 331.7 L414.9 329.2 L417.5 327.3 L420.1 326.0 L422.7 325.8 L425.3 326.2 L427.9 326.8 L430.5 328.1 L433.1 329.9 L435.7 332.2 L438.3 334.6 L440.9 336.9 L443.5 339.2 L446.2 341.5 L448.8 343.8 L451.4 346.0 L454.0 348.1 L456.6 349.9 L459.2 351.6 L461.8 353.2 L464.4 354.8 L467.0 356.3 L469.6 357.8 L472.2 359.2 L474.8 360.9 L477.4 362.9 L480.0 365.3 L482.6 368.1 L485.2 371.3 L487.8 375.0 L490.4 379.0 L493.0 383.1 L495.6 387.1 L498.3 391.2 L500.9 395.0 L503.5 398.5 L506.1 401.5 L508.7 403.4 L511.3 404.1 L513.9 403.7 L516.5 402.0 L519.1 397.8 L521.7 391.5 L524.3 384.4 L526.9 378.5 L529.5 374.7 L532.1 373.2 L534.7 373.0 L537.3 374.1 L539.9 377.5 L542.5 383.0 L545.1 389.5 L547.7 395.5 L550.4 399.5 L553.0 401.1 L555.6 400.6 L558.2 399.0 L560.8 396.7 L563.4 393.3 L566.0 389.0 L568.6 384.2 L571.2 378.9 L573.8 373.2 L576.4 367.5 L579.0 361.9 L581.6 356.3 L584.2 350.7 L586.8 345.2 L589.4 340.2 L592.0 336.6 L594.6 335.4 L597.2 336.2 L599.8 338.2 L602.5 341.0 L605.1 343.8 L607.7 346.2 L610.3 347.4 L612.9 347.4 L615.5 346.4 L618.1 344.5 L620.7 341.2 L623.3 337.1 L625.9 333.5 L628.5 331.1 L631.1 329.9 L633.7 329.9 L636.3 330.4" fill="none" stroke="#d8a810" stroke-width="0.9" stroke-dasharray="2.2 2"/>
<path d="M3.3 372.4C3.8 373.3 5.5 376.6 6.5 378.0C7.5 379.4 8.7 380.7 9.4 381.0C10.2 381.3 10.7 380.0 11.0 379.8" fill="none" stroke="#f8188e" stroke-width="2.1" stroke-linecap="round" stroke-linejoin="round"/>
<path d="M11.0 379.8C11.4 378.8 12.4 376.7 13.5 374.0C14.6 371.3 16.3 366.8 17.5 363.5C18.7 360.2 19.5 356.9 20.5 354.0C21.5 351.1 22.5 348.2 23.4 346.0C24.3 343.8 25.1 341.8 26.0 340.5C26.9 339.2 27.6 338.2 28.5 338.2C29.4 338.1 30.5 339.6 31.5 340.2C32.5 340.8 33.5 341.9 34.6 342.0C35.7 342.1 36.9 341.1 38.0 340.8C39.1 340.5 39.7 340.2 41.0 340.0C42.3 339.8 44.5 339.6 46.0 339.6C47.5 339.6 49.0 340.3 50.3 340.0C51.6 339.7 52.8 338.7 54.0 338.0C55.2 337.3 56.4 336.2 57.3 335.9C58.2 335.6 59.0 336.0 59.4 336.0" fill="none" stroke="#22b4f0" stroke-width="2.1" stroke-linecap="round" stroke-linejoin="round"/>
<path d="M59.4 336.0C60.1 336.3 62.1 336.7 63.5 337.6C64.9 338.5 66.5 339.6 67.8 341.2C69.1 342.8 70.0 344.4 71.3 347.0C72.6 349.6 74.0 353.7 75.4 357.0C76.8 360.3 78.1 363.8 79.5 367.0C80.9 370.2 82.2 373.4 83.6 376.5C85.0 379.6 86.5 382.9 87.7 385.7C88.9 388.4 89.6 390.7 90.6 393.0C91.6 395.3 92.4 397.8 93.5 399.7C94.6 401.6 95.8 403.0 97.0 404.4C98.2 405.8 99.5 407.1 100.6 407.9C101.7 408.7 102.5 408.8 103.5 409.4C104.5 410.0 105.3 410.6 106.4 411.4C107.5 412.2 108.9 413.5 110.0 414.4C111.1 415.2 112.1 416.4 113.0 416.5C113.9 416.6 114.5 415.5 115.2 415.0C115.9 414.5 116.1 413.8 117.0 413.7C117.9 413.6 119.8 414.1 120.4 414.2" fill="none" stroke="#f8188e" stroke-width="2.1" stroke-linecap="round" stroke-linejoin="round"/>
<path d="M120.4 414.2C121.2 414.0 123.2 413.5 125.0 413.0C126.8 412.5 129.2 411.9 131.0 411.4C132.8 410.9 134.4 410.4 136.0 409.8C137.6 409.2 138.8 408.8 140.3 407.9C141.8 407.0 143.4 405.8 145.0 404.6C146.6 403.4 148.3 402.1 149.7 400.9C151.1 399.7 152.2 398.8 153.4 397.6C154.6 396.4 155.6 395.6 156.7 393.9C157.8 392.2 158.8 389.6 160.0 387.4C161.2 385.2 162.6 382.7 163.7 380.6C164.8 378.5 165.6 376.6 166.6 374.6C167.6 372.6 168.4 370.7 169.6 368.8C170.8 366.9 172.2 365.1 173.5 363.4C174.8 361.7 176.2 360.1 177.5 358.8C178.8 357.5 179.8 356.6 181.0 355.6C182.2 354.6 183.4 354.3 184.6 353.0C185.8 351.7 186.8 349.8 188.0 348.0C189.2 346.2 190.4 344.1 191.6 342.4C192.8 340.7 193.8 339.3 195.0 338.0C196.2 336.7 197.6 335.2 198.6 334.7C199.6 334.2 200.2 334.8 201.0 335.2C201.8 335.6 203.2 336.5 203.6 336.8" fill="none" stroke="#22b4f0" stroke-width="2.1" stroke-linecap="round" stroke-linejoin="round"/>
<path d="M203.6 336.8C204.4 337.7 206.9 340.5 208.6 342.4C210.3 344.3 212.2 346.5 213.8 348.3C215.4 350.1 216.6 351.8 218.0 353.4C219.4 354.9 220.7 356.4 222.0 357.6C223.3 358.8 224.6 359.4 226.0 360.4C227.4 361.4 228.9 362.2 230.2 363.5C231.5 364.8 232.6 366.2 233.8 368.0C235.0 369.8 236.1 371.8 237.2 374.0C238.3 376.2 239.2 378.7 240.2 381.0C241.2 383.3 242.0 385.9 243.0 388.0C244.0 390.1 245.0 392.1 246.0 393.8C247.0 395.6 247.8 397.1 248.9 398.5C250.0 399.9 251.2 400.8 252.4 402.0C253.6 403.2 254.7 404.2 255.9 405.6C257.1 407.0 258.2 408.8 259.4 410.4C260.6 411.9 261.7 413.7 262.9 414.9C264.1 416.1 265.2 416.9 266.4 417.8C267.6 418.7 268.6 419.4 269.9 420.1C271.2 420.8 272.6 421.4 274.0 421.8C275.4 422.2 276.8 422.6 278.1 422.6C279.4 422.6 280.4 422.2 281.6 422.0C282.8 421.8 284.2 421.4 285.1 421.2C286.0 421.0 286.7 421.0 287.0 421.0" fill="none" stroke="#f8188e" stroke-width="2.1" stroke-linecap="round" stroke-linejoin="round"/>
<path d="M287.0 421.0C287.6 420.5 289.4 419.0 290.6 417.8C291.9 416.6 293.3 415.0 294.5 413.7C295.7 412.4 296.8 411.3 298.0 410.0C299.2 408.7 300.5 407.4 301.5 406.0C302.5 404.6 303.2 403.2 304.0 401.6C304.8 400.0 305.5 398.6 306.2 396.2C306.9 393.8 307.4 390.1 308.0 387.0C308.6 383.9 309.0 380.7 309.7 377.5C310.4 374.3 311.2 370.9 312.0 368.0C312.8 365.1 313.5 362.2 314.3 360.0C315.1 357.8 315.8 356.2 316.6 354.6C317.4 353.0 318.0 351.8 319.0 350.6C320.0 349.4 321.2 348.4 322.4 347.6C323.6 346.8 325.0 346.1 326.0 345.9C327.0 345.7 327.6 346.1 328.4 346.4C329.2 346.7 330.2 347.4 330.6 347.6" fill="none" stroke="#22b4f0" stroke-width="2.1" stroke-linecap="round" stroke-linejoin="round"/>
<path d="M330.6 347.6C331.2 348.1 332.9 349.1 334.0 350.4C335.1 351.7 336.4 352.9 337.5 355.3C338.6 357.7 339.4 361.7 340.4 365.0C341.4 368.3 342.2 371.9 343.4 375.2C344.6 378.5 346.0 381.9 347.4 385.0C348.8 388.1 350.2 391.7 351.6 393.9C353.0 396.1 354.2 396.9 355.6 398.0C357.0 399.1 358.7 400.1 359.8 400.2C360.9 400.3 361.3 399.3 362.0 398.6C362.7 397.9 363.5 396.6 363.8 396.2" fill="none" stroke="#f8188e" stroke-width="2.1" stroke-linecap="round" stroke-linejoin="round"/>
<path d="M363.8 396.2C364.6 395.0 367.1 391.3 368.8 389.0C370.5 386.7 372.1 384.3 373.8 382.2C375.5 380.1 377.2 378.1 379.0 376.2C380.8 374.2 382.7 372.7 384.3 370.5C385.9 368.3 387.0 365.7 388.4 363.2C389.8 360.7 391.1 357.9 392.5 355.3C393.9 352.7 395.2 350.1 396.6 347.6C398.0 345.1 399.3 342.3 400.7 340.1C402.1 337.9 403.4 336.0 404.8 334.2C406.2 332.4 407.6 330.4 408.9 329.1C410.2 327.8 411.2 327.0 412.4 326.2C413.6 325.4 414.9 324.6 415.9 324.2C416.9 323.8 417.6 323.8 418.4 323.7C419.2 323.6 419.9 323.5 420.6 323.8C421.3 324.1 422.4 325.3 422.8 325.6" fill="none" stroke="#22b4f0" stroke-width="2.1" stroke-linecap="round" stroke-linejoin="round"/>
<path d="M422.8 325.6C423.3 325.8 424.6 326.4 425.6 326.9C426.6 327.4 427.5 327.4 428.7 328.4C429.9 329.4 431.4 331.2 432.8 332.8C434.2 334.4 435.6 336.4 436.9 337.7C438.2 339.0 439.2 339.6 440.4 340.6C441.6 341.6 442.8 342.6 444.0 343.6C445.2 344.6 446.2 345.6 447.4 346.6C448.6 347.7 449.6 348.9 451.0 349.9C452.4 350.9 454.1 351.7 455.6 352.6C457.2 353.5 458.5 354.3 460.3 355.3C462.1 356.3 464.5 357.6 466.6 358.8C468.8 360.0 471.3 360.9 473.2 362.3C475.1 363.7 476.4 365.2 478.0 367.0C479.6 368.8 481.1 370.9 482.5 372.8C483.9 374.7 485.1 376.7 486.2 378.6C487.3 380.6 488.2 382.5 489.4 384.5C490.6 386.5 492.0 388.7 493.4 390.8C494.8 392.9 496.2 395.5 497.5 397.4C498.8 399.3 499.8 400.6 501.0 402.0C502.2 403.4 503.7 405.2 504.6 406.0C505.5 406.8 505.8 406.8 506.4 407.0C507.0 407.2 507.4 407.3 508.0 407.2C508.6 407.1 509.3 406.6 510.0 406.2C510.7 405.8 511.7 404.9 512.0 404.6" fill="none" stroke="#f8188e" stroke-width="2.1" stroke-linecap="round" stroke-linejoin="round"/>
<path d="M512.0 404.6C512.4 404.3 513.7 403.4 514.4 402.6C515.1 401.8 515.6 401.1 516.2 399.7C516.8 398.3 517.4 396.3 518.0 394.4C518.6 392.4 519.2 390.3 519.8 388.0C520.4 385.7 521.0 382.9 521.6 380.6C522.2 378.3 522.7 375.9 523.3 374.0C523.9 372.1 524.6 370.6 525.4 369.4C526.2 368.2 527.1 367.2 527.9 367.0C528.7 366.8 529.4 367.8 530.2 368.4C531.0 369.0 531.7 370.1 532.6 370.9C533.5 371.7 534.9 372.9 535.4 373.3" fill="none" stroke="#22b4f0" stroke-width="2.1" stroke-linecap="round" stroke-linejoin="round"/>
<path d="M535.4 373.3C535.8 373.9 536.9 375.1 537.6 376.6C538.3 378.1 539.0 380.2 539.6 382.2C540.2 384.2 540.8 386.5 541.4 388.6C542.0 390.7 542.5 393.0 543.1 395.0C543.7 397.0 544.3 398.8 544.9 400.4C545.5 402.0 546.2 403.4 546.7 404.4C547.2 405.4 547.5 406.1 548.0 406.6C548.5 407.1 548.9 407.2 549.4 407.2C549.9 407.2 550.4 406.9 551.0 406.4C551.6 405.9 552.5 404.4 552.8 404.0" fill="none" stroke="#f8188e" stroke-width="2.1" stroke-linecap="round" stroke-linejoin="round"/>
<path d="M552.8 404.0C553.4 403.1 555.1 400.5 556.4 398.6C557.7 396.7 559.4 394.9 560.7 392.7C562.0 390.5 563.0 388.1 564.2 385.6C565.4 383.1 566.5 380.2 567.7 377.5C568.9 374.8 570.0 372.1 571.2 369.4C572.4 366.7 573.4 364.0 574.7 361.1C576.0 358.2 577.4 355.1 578.8 352.2C580.2 349.3 581.7 346.1 582.9 343.6C584.1 341.1 584.8 339.3 585.8 337.4C586.8 335.4 587.9 333.1 588.7 331.9C589.5 330.7 589.9 330.5 590.4 330.2C590.9 329.9 591.3 329.8 591.8 330.0C592.3 330.2 592.8 330.7 593.4 331.4C594.0 332.1 594.9 333.6 595.2 334.0" fill="none" stroke="#22b4f0" stroke-width="2.1" stroke-linecap="round" stroke-linejoin="round"/>
<path d="M595.2 334.0C595.7 334.9 597.3 337.8 598.4 339.6C599.5 341.4 600.6 343.3 601.6 344.8C602.6 346.3 603.6 347.4 604.6 348.4C605.6 349.4 606.6 350.4 607.5 350.6C608.4 350.8 608.9 350.3 609.8 349.8C610.6 349.3 612.1 348.1 612.6 347.8" fill="none" stroke="#f8188e" stroke-width="2.1" stroke-linecap="round" stroke-linejoin="round"/>
<path d="M612.6 347.8C613.1 347.3 614.5 345.9 615.4 344.8C616.3 343.7 617.2 342.7 618.0 341.2C618.8 339.7 619.6 337.8 620.4 336.0C621.2 334.2 621.9 332.1 622.7 330.7C623.5 329.3 624.2 328.3 625.0 327.6C625.8 326.9 626.6 326.6 627.3 326.5C628.0 326.4 628.6 326.6 629.2 326.8C629.9 327.1 630.9 327.8 631.2 328.0" fill="none" stroke="#22b4f0" stroke-width="2.1" stroke-linecap="round" stroke-linejoin="round"/>
<path d="M631.2 328.0C631.7 328.4 633.4 329.6 634.4 330.2C635.4 330.8 636.9 331.6 637.4 331.9" fill="none" stroke="#f8188e" stroke-width="2.1" stroke-linecap="round" stroke-linejoin="round"/>
<line x1="3.30" y1="431.50" x2="3.30" y2="433.60" stroke="#f0f0f0" stroke-width="0.8" />
<text x="2.90" y="440.20" font-size="6.50" fill="#e4e4e4" textLength="33.20" lengthAdjust="spacingAndGlyphs" stroke="#e4e4e4" stroke-width="0.22" >11 Sep 2018</text>
<line x1="44.99" y1="431.50" x2="44.99" y2="433.60" stroke="#f0f0f0" stroke-width="0.8" />
<text x="44.59" y="440.20" font-size="6.50" fill="#e4e4e4" textLength="35.20" lengthAdjust="spacingAndGlyphs" stroke="#e4e4e4" stroke-width="0.22" >11 Sep 09:30</text>
<line x1="86.68" y1="431.50" x2="86.68" y2="433.60" stroke="#f0f0f0" stroke-width="0.8" />
<text x="86.28" y="440.20" font-size="6.50" fill="#e4e4e4" textLength="35.20" lengthAdjust="spacingAndGlyphs" stroke="#e4e4e4" stroke-width="0.22" >11 Sep 13:30</text>
<line x1="128.37" y1="431.50" x2="128.37" y2="433.60" stroke="#f0f0f0" stroke-width="0.8" />
<text x="127.97" y="440.20" font-size="6.50" fill="#e4e4e4" textLength="35.20" lengthAdjust="spacingAndGlyphs" stroke="#e4e4e4" stroke-width="0.22" >11 Sep 17:30</text>
<line x1="170.06" y1="431.50" x2="170.06" y2="433.60" stroke="#f0f0f0" stroke-width="0.8" />
<text x="169.66" y="440.20" font-size="6.50" fill="#e4e4e4" textLength="35.20" lengthAdjust="spacingAndGlyphs" stroke="#e4e4e4" stroke-width="0.22" >11 Sep 21:30</text>
<line x1="211.75" y1="431.50" x2="211.75" y2="433.60" stroke="#f0f0f0" stroke-width="0.8" />
<text x="211.35" y="440.20" font-size="6.50" fill="#e4e4e4" textLength="35.20" lengthAdjust="spacingAndGlyphs" stroke="#e4e4e4" stroke-width="0.22" >12 Sep 01:30</text>
<line x1="253.44" y1="431.50" x2="253.44" y2="433.60" stroke="#f0f0f0" stroke-width="0.8" />
<text x="253.04" y="440.20" font-size="6.50" fill="#e4e4e4" textLength="35.20" lengthAdjust="spacingAndGlyphs" stroke="#e4e4e4" stroke-width="0.22" >12 Sep 05:30</text>
<line x1="295.13" y1="431.50" x2="295.13" y2="433.60" stroke="#f0f0f0" stroke-width="0.8" />
<text x="294.73" y="440.20" font-size="6.50" fill="#e4e4e4" textLength="35.20" lengthAdjust="spacingAndGlyphs" stroke="#e4e4e4" stroke-width="0.22" >12 Sep 09:30</text>
<line x1="336.82" y1="431.50" x2="336.82" y2="433.60" stroke="#f0f0f0" stroke-width="0.8" />
<text x="336.42" y="440.20" font-size="6.50" fill="#e4e4e4" textLength="35.20" lengthAdjust="spacingAndGlyphs" stroke="#e4e4e4" stroke-width="0.22" >12 Sep 13:30</text>
<line x1="378.51" y1="431.50" x2="378.51" y2="433.60" stroke="#f0f0f0" stroke-width="0.8" />
<text x="378.11" y="440.20" font-size="6.50" fill="#e4e4e4" textLength="35.20" lengthAdjust="spacingAndGlyphs" stroke="#e4e4e4" stroke-width="0.22" >12 Sep 17:30</text>
<line x1="420.20" y1="431.50" x2="420.20" y2="433.60" stroke="#f0f0f0" stroke-width="0.8" />
<text x="419.80" y="440.20" font-size="6.50" fill="#e4e4e4" textLength="35.20" lengthAdjust="spacingAndGlyphs" stroke="#e4e4e4" stroke-width="0.22" >12 Sep 21:30</text>
<line x1="461.89" y1="431.50" x2="461.89" y2="433.60" stroke="#f0f0f0" stroke-width="0.8" />
<text x="461.49" y="440.20" font-size="6.50" fill="#e4e4e4" textLength="35.20" lengthAdjust="spacingAndGlyphs" stroke="#e4e4e4" stroke-width="0.22" >13 Sep 01:30</text>
<line x1="503.58" y1="431.50" x2="503.58" y2="433.60" stroke="#f0f0f0" stroke-width="0.8" />
<text x="503.18" y="440.20" font-size="6.50" fill="#e4e4e4" textLength="35.20" lengthAdjust="spacingAndGlyphs" stroke="#e4e4e4" stroke-width="0.22" >13 Sep 05:30</text>
<line x1="545.27" y1="431.50" x2="545.27" y2="433.60" stroke="#f0f0f0" stroke-width="0.8" />
<text x="544.87" y="440.20" font-size="6.50" fill="#e4e4e4" textLength="35.20" lengthAdjust="spacingAndGlyphs" stroke="#e4e4e4" stroke-width="0.22" >13 Sep 09:30</text>
<line x1="586.96" y1="431.50" x2="586.96" y2="433.60" stroke="#f0f0f0" stroke-width="0.8" />
<text x="586.56" y="440.20" font-size="6.50" fill="#e4e4e4" textLength="35.20" lengthAdjust="spacingAndGlyphs" stroke="#e4e4e4" stroke-width="0.22" >13 Sep 13:30</text>
<line x1="628.65" y1="431.50" x2="628.65" y2="433.60" stroke="#f0f0f0" stroke-width="0.8" />
<text x="628.25" y="440.20" font-size="6.50" fill="#e4e4e4" textLength="35.20" lengthAdjust="spacingAndGlyphs" stroke="#e4e4e4" stroke-width="0.22" >13 Sep 17:30</text>
<path d="M3 427.5 l2.6 2 -2.6 1.6z" fill="#b8c8d8"/>
</g>
<g id="charttabs">
<rect x="-6.00" y="444.70" width="673.00" height="15.20" fill="#f3f3f4" />
<rect x="-6.00" y="444.60" width="673.00" height="1.50" fill="#fafafa" />
<line x1="-6.00" y1="446.50" x2="525.60" y2="446.50" stroke="#555558" stroke-width="0.9" />
<line x1="585.00" y1="446.50" x2="667.00" y2="446.50" stroke="#555558" stroke-width="0.9" />
<line x1="0.80" y1="446.40" x2="0.80" y2="458.40" stroke="#8c8c90" stroke-width="1.2" />
<text x="10.90" y="454.90" font-size="7.50" fill="#848488" textLength="39.40" lengthAdjust="spacingAndGlyphs" stroke="#848488" stroke-width="0.22" >EURUSD,H1</text>
<line x1="59.00" y1="448.20" x2="59.00" y2="457.40" stroke="#a4a4a8" stroke-width="0.8" />
<text x="66.20" y="454.90" font-size="7.50" fill="#848488" textLength="44.80" lengthAdjust="spacingAndGlyphs" stroke="#848488" stroke-width="0.22" >GBPUSD,M15</text>
<line x1="119.00" y1="448.20" x2="119.00" y2="457.40" stroke="#a4a4a8" stroke-width="0.8" />
<text x="125.60" y="454.90" font-size="7.50" fill="#848488" textLength="45.00" lengthAdjust="spacingAndGlyphs" stroke="#848488" stroke-width="0.22" >EURUSD,M30</text>
<line x1="178.50" y1="448.20" x2="178.50" y2="457.40" stroke="#a4a4a8" stroke-width="0.8" />
<text x="185.70" y="454.90" font-size="7.50" fill="#848488" textLength="47.90" lengthAdjust="spacingAndGlyphs" stroke="#848488" stroke-width="0.22" >AUDNZD,M30</text>
<line x1="241.50" y1="448.20" x2="241.50" y2="457.40" stroke="#a4a4a8" stroke-width="0.8" />
<text x="248.30" y="454.90" font-size="7.50" fill="#848488" textLength="38.70" lengthAdjust="spacingAndGlyphs" stroke="#848488" stroke-width="0.22" >EURUSD,H1</text>
<line x1="295.90" y1="448.20" x2="295.90" y2="457.40" stroke="#a4a4a8" stroke-width="0.8" />
<text x="303.00" y="454.90" font-size="7.50" fill="#848488" textLength="47.50" lengthAdjust="spacingAndGlyphs" stroke="#848488" stroke-width="0.22" >AUDCHF,M15</text>
<line x1="358.80" y1="448.20" x2="358.80" y2="457.40" stroke="#a4a4a8" stroke-width="0.8" />
<text x="365.80" y="454.90" font-size="7.50" fill="#848488" textLength="38.70" lengthAdjust="spacingAndGlyphs" stroke="#848488" stroke-width="0.22" >EURUSD,H1</text>
<line x1="413.30" y1="448.20" x2="413.30" y2="457.40" stroke="#a4a4a8" stroke-width="0.8" />
<text x="420.50" y="454.90" font-size="7.50" fill="#848488" textLength="44.50" lengthAdjust="spacingAndGlyphs" stroke="#848488" stroke-width="0.22" >EURUSD,M15</text>
<line x1="473.40" y1="448.20" x2="473.40" y2="457.40" stroke="#a4a4a8" stroke-width="0.8" />
<text x="480.50" y="454.90" font-size="7.50" fill="#848488" textLength="36.50" lengthAdjust="spacingAndGlyphs" stroke="#848488" stroke-width="0.22" >USDJPY,H1</text>
<path d="M525.6 446 V458.2 H585 V446" fill="#ffffff" stroke="#4c4c50" stroke-width="0.9"/>
<rect x="526.10" y="444.60" width="58.40" height="2.40" fill="#ffffff" />
<text x="532.50" y="454.90" font-size="7.40" fill="#1c1c1c" textLength="45.00" lengthAdjust="spacingAndGlyphs" stroke="#1c1c1c" stroke-width="0.22" >GBPUSD,M15</text>
<path d="M648.2 450 l-2.2 1.8 2.2 1.8z M658.6 450 l2.2 1.8 -2.2 1.8z" fill="#9a9aa0"/>
</g>
<g id="statusbar">
<rect x="-6.00" y="459.80" width="673.00" height="14.80" fill="#f6f6f7" />
<line x1="-6.00" y1="460.00" x2="667.00" y2="460.00" stroke="#d4d4d8" stroke-width="0.7" />
<text x="1.60" y="469.70" font-size="7.80" fill="#141414" textLength="59.50" lengthAdjust="spacingAndGlyphs" stroke="#141414" stroke-width="0.22" >For Help, press F1</text>
<line x1="215.60" y1="461.60" x2="215.60" y2="473.20" stroke="#b4b4b8" stroke-width="0.8" />
<line x1="290.40" y1="461.60" x2="290.40" y2="473.20" stroke="#b4b4b8" stroke-width="0.8" />
<line x1="357.50" y1="461.60" x2="357.50" y2="473.20" stroke="#b4b4b8" stroke-width="0.8" />
<line x1="403.80" y1="461.60" x2="403.80" y2="473.20" stroke="#b4b4b8" stroke-width="0.8" />
<line x1="450.00" y1="461.60" x2="450.00" y2="473.20" stroke="#b4b4b8" stroke-width="0.8" />
<line x1="494.50" y1="461.60" x2="494.50" y2="473.20" stroke="#b4b4b8" stroke-width="0.8" />
<line x1="539.50" y1="461.60" x2="539.50" y2="473.20" stroke="#b4b4b8" stroke-width="0.8" />
<line x1="582.50" y1="461.60" x2="582.50" y2="473.20" stroke="#b4b4b8" stroke-width="0.8" />
<text x="219.00" y="469.70" font-size="7.80" fill="#141414" textLength="24.80" lengthAdjust="spacingAndGlyphs" stroke="#141414" stroke-width="0.22" >Default</text>
<text x="294.50" y="469.70" font-size="7.80" fill="#141414" textLength="54.30" lengthAdjust="spacingAndGlyphs" stroke="#141414" stroke-width="0.22" >2018.09.12 12:15</text>
<text x="361.30" y="469.70" font-size="7.80" fill="#141414" textLength="34.50" lengthAdjust="spacingAndGlyphs" stroke="#141414" stroke-width="0.22" >O: 1.30206</text>
<text x="407.50" y="469.70" font-size="7.80" fill="#141414" textLength="34.50" lengthAdjust="spacingAndGlyphs" stroke="#141414" stroke-width="0.22" >H: 1.30259</text>
<text x="453.80" y="469.70" font-size="7.80" fill="#141414" textLength="33.60" lengthAdjust="spacingAndGlyphs" stroke="#141414" stroke-width="0.22" >L: 1.30195</text>
<text x="498.00" y="469.70" font-size="7.80" fill="#141414" textLength="34.00" lengthAdjust="spacingAndGlyphs" stroke="#141414" stroke-width="0.22" >C: 1.30249</text>
<text x="543.80" y="469.70" font-size="7.80" fill="#141414" textLength="23.00" lengthAdjust="spacingAndGlyphs" stroke="#141414" stroke-width="0.22" >V: 1171</text>
<text x="604.30" y="469.70" font-size="7.80" fill="#141414" textLength="24.50" lengthAdjust="spacingAndGlyphs" stroke="#141414" stroke-width="0.22" >68/0 kb</text>
<rect x="586.30" y="467.00" width="1.35" height="4.60" fill="#5a8c4c" />
<rect x="588.20" y="466.38" width="1.35" height="5.22" fill="#5a8c4c" />
<rect x="590.10" y="465.76" width="1.35" height="5.84" fill="#5a8c4c" />
<rect x="592.00" y="465.14" width="1.35" height="6.46" fill="#5a8c4c" />
<rect x="593.90" y="464.52" width="1.35" height="7.08" fill="#5a8c4c" />
<rect x="595.80" y="463.90" width="1.35" height="7.70" fill="#5a8c4c" />
<rect x="597.70" y="463.28" width="1.35" height="8.32" fill="#3c6cac" />
<rect x="599.60" y="462.66" width="1.35" height="8.94" fill="#3c6cac" />
</g>
<g id="taskbar">
<rect x="-6.00" y="474.50" width="673.00" height="25.60" fill="url(#tkV)" />
<rect x="-6.00" y="474.50" width="306.00" height="25.60" fill="url(#tkL)" />
<rect x="505.00" y="474.50" width="162.00" height="25.60" fill="url(#tkR)" />
<g filter="url(#blur1)" opacity="0.7"><path d="M493 474 L504 474 L534 501 L521 501Z" fill="#cfe4fb"/><path d="M330 501 L380 474 L420 474 L360 501Z" fill="#3a8cd4" opacity="0.35"/><path d="M560 474 L640 474 L600 501 L540 501Z" fill="#1c5ea8" opacity="0.6"/></g>
<line x1="-6.00" y1="474.60" x2="667.00" y2="474.60" stroke="#5a7498" stroke-width="0.7" />
<circle cx="17.3" cy="487.0" r="11.6" fill="url(#orb)" stroke="#a8d0f0" stroke-width="0.9" stroke-opacity="0.75"/>
<path d="M6.6 484.6 A11 11 0 0 1 28 484.6 Q17.3 488.4 6.6 484.6Z" fill="url(#orbH)"/>
<g><path d="M12.2 480.4 q3 -1.9 5.8 -0.3 l-1.5 5.5 q-2.8 -1.4 -5.8 0.3z" fill="#ee5a24"/><path d="M19.2 480.6 q3 1.9 6 0 l-1.5 5.5 q-3 1.9 -6 0z" fill="#8cc63c"/><path d="M10.2 487.4 q3 -1.9 5.8 -0.3 l-1.5 5.5 q-2.8 -1.4 -5.8 0.3z" fill="#3cb0f4"/><path d="M17.2 487.6 q3 1.9 6 0 l-1.5 5.5 q-3 1.9 -6 0z" fill="#fcc428"/></g>
<rect x="38.90" y="475.40" width="38.00" height="24.40" fill="url(#tbtn)" stroke="#a8d2ee" stroke-width="0.7" rx="1.6" />
<rect x="79.60" y="475.40" width="38.00" height="24.40" fill="url(#tbtn)" stroke="#a8d2ee" stroke-width="0.7" rx="1.6" />
<rect x="120.30" y="475.40" width="38.00" height="24.40" fill="url(#tbtn)" stroke="#a8d2ee" stroke-width="0.7" rx="1.6" />
<rect x="160.40" y="475.40" width="38.00" height="24.40" fill="url(#tbtn)" stroke="#a8d2ee" stroke-width="0.7" rx="1.6" />
<rect x="200.80" y="475.40" width="38.00" height="24.40" fill="url(#tbtn)" stroke="#a8d2ee" stroke-width="0.7" rx="1.6" />
<rect x="241.20" y="475.40" width="38.00" height="24.40" fill="url(#tbtnA)" stroke="#d4e6f6" stroke-width="0.7" rx="1.6" />
<g><circle cx="57.9" cy="487.2" r="9.9" fill="#e4473c"/>
<path d="M57.90 487.20 L66.47 482.25 A9.9 9.9 0 0 1 56.18 496.95 Z" fill="#fbc02d"/>
<path d="M57.90 487.20 L56.18 496.95 A9.9 9.9 0 0 1 49.33 482.25 Z" fill="#34a853"/>
<circle cx="57.9" cy="487.2" r="4.7" fill="#f4f4f4"/><circle cx="57.9" cy="487.2" r="3.6" fill="#4285f4"/></g>
<g><circle cx="95.0" cy="483.6" r="6.6" fill="#10a4ee"/><circle cx="101.6" cy="490.2" r="6.4" fill="#0c98e6"/><circle cx="98.3" cy="486.9" r="8.3" fill="#12a0ec"/>
<text x="93.40" y="492.90" font-size="15.40" fill="#ffffff" textLength="9.80" lengthAdjust="spacingAndGlyphs" font-weight="bold" stroke="#ffffff" stroke-width="0.22" >S</text>
</g>
<g><path d="M126.6 480.2 q0 -1 1 -1 h5.4 l1.8 1.8 h11.2 q1 0 1 1 v13.4 h-20.4z" fill="#f2d88a" stroke="#cfa848" stroke-width="0.5"/><rect x="128.4" y="481.6" width="17.6" height="4.4" fill="#fdfdf6"/><rect x="126.8" y="484.2" width="20" height="11.4" rx="0.6" fill="url(#fold)"/><circle cx="129.6" cy="479.8" r="1.1" fill="#28b428"/><circle cx="135.2" cy="481.2" r="1.0" fill="#dc4430"/><circle cx="140.6" cy="482.4" r="1.0" fill="#2c8cdc"/><path d="M129.2 497 v-6.6 q0 -1.2 1.2 -1.2 h12.4 q1.2 0 1.2 1.2 v6.6 h-3 v-3.4 h-8.8 v3.4z" fill="#a4d6f2" stroke="#6cb0dc" stroke-width="0.5"/><rect x="130" y="489.8" width="4" height="3" fill="#e8f6fd" opacity="0.8"/></g>
<g><path d="M169.2 489.2 l6.4 -11.8 13.4 8.4 -8.8 10.8z" fill="#eed89c" stroke="#b48c2c" stroke-width="0.6"/><path d="M169.2 489.2 l11 7.4 8.8 -10.8 0.6 1.6 -9.2 11 -11.2 -7.6z" fill="#d8a624"/><path d="M170.4 488.8 l5.6 -10.2 11.6 7.2 -7.6 9.4z" fill="#f4e4b0"/><circle cx="179.0" cy="485.4" r="4.9" fill="#3c9c54"/><path d="M179 485.4 L183.4 483 A4.9 4.9 0 0 1 181 489.9Z" fill="#2c6cc4"/><path d="M176.6 486 l2.4 -0.6 1.4 -3 M179 485.4 l1.6 2.6" stroke="#f4ecc0" stroke-width="0.9" fill="none"/></g>
<g><path d="M227.4 480.2 l2.2 0.8 -1.8 14.6 -3.6 -1z" fill="#a89470"/><path d="M217.2 479 l10.4 1.1 -3.4 14.5 -14.8 -3z" fill="url(#npad)" stroke="#9cc4d4" stroke-width="0.4"/><path d="M224.2 494.6 l-7.4 -1.5 7.6 -7.2 1.6 1.7z" fill="#f0f4f8"/><path d="M217.2 479 l10.4 1.1 -0.4 1.5 -10.6 -1.2z" fill="#c8ccd0"/></g>
<rect x="249.40" y="477.40" width="21.00" height="19.80" fill="#3c7c2c" rx="0.6" />
<rect x="249.40" y="477.40" width="21.00" height="8.00" fill="#4c8e3a" rx="0.6" opacity="0.6"/>
<text x="252.60" y="490.40" font-size="7.60" fill="#f0f6ec" textLength="14.40" lengthAdjust="spacingAndGlyphs" font-weight="bold" stroke="#f0f6ec" stroke-width="0.22" >FBS</text>
<line x1="252.80" y1="492.60" x2="266.80" y2="492.60" stroke="#e4f0dc" stroke-width="0.9" />
<g><circle cx="553.4" cy="486.0" r="3.6" fill="#1ca8ee"/><circle cx="555.8" cy="488.4" r="3.6" fill="#1ca8ee"/><circle cx="554.6" cy="487.2" r="4.4" fill="#1ca8ee"/>
<text x="552.30" y="489.90" font-size="7.40" fill="#ffffff" textLength="4.60" lengthAdjust="spacingAndGlyphs" font-weight="bold" stroke="#ffffff" stroke-width="0.22" >S</text>
</g>
<g><path d="M566 483 v9.6" stroke="#e8e8e8" stroke-width="0.9"/><path d="M566.4 483.2 h6.4 v4.6 h-6.4z" fill="#f4f4f4" stroke="#a8a8a8" stroke-width="0.4"/><circle cx="572.2" cy="490.2" r="2.7" fill="#e02818" stroke="#fff" stroke-width="0.4"/><path d="M571.1 489.1 l2.2 2.2 M573.3 489.1 l-2.2 2.2" stroke="#fff" stroke-width="0.7"/></g>
<g><rect x="582.4" y="484" width="7.4" height="5.8" fill="#dce8f4" stroke="#f4f4f4" stroke-width="0.8"/><rect x="583.2" y="484.8" width="5.8" height="4.2" fill="#2c4c74"/><path d="M581.4 491.6 h7.6 M585.6 490 v1.6" stroke="#e8e8e8" stroke-width="0.9"/></g>
<g><path d="M596.4 485.8 h2 l2.6 -2.4 v7.8 l-2.6 -2.4 h-2z" fill="#f0f0f0"/><path d="M602.4 484.6 q1.8 2.6 0 5.2 M604 483.4 q2.6 3.8 0 7.6" stroke="#e8e8e8" stroke-width="0.6" fill="none"/></g>
<text x="620.20" y="484.90" font-size="7.70" fill="#ffffff" textLength="28.60" lengthAdjust="spacingAndGlyphs" stroke="#ffffff" stroke-width="0.22" >4:05 AM</text>
<text x="617.60" y="496.20" font-size="7.70" fill="#ffffff" textLength="33.60" lengthAdjust="spacingAndGlyphs" stroke="#ffffff" stroke-width="0.22" >10/1/2018</text>
<rect x="658.40" y="474.60" width="8.80" height="25.60" fill="#3a6aa4" opacity="0.75"/>
<line x1="658.40" y1="475.00" x2="658.40" y2="500.00" stroke="#9cbce0" stroke-width="0.7" />
<line x1="658.40" y1="498.60" x2="667.00" y2="498.60" stroke="#5a8cc8" stroke-width="0.9" />
</g>
<g id="dialog">
<rect x="163.7" y="50.2" width="405.9" height="256.9" rx="5" fill="#000" opacity="0.35" filter="url(#blur2)"/>
<rect x="165.20" y="50.70" width="402.40" height="253.90" rx="4" fill="url(#dlgF)" stroke="#9aa6b6" stroke-width="0.8"/>
<rect x="165.70" y="73.00" width="4.20" height="55.00" fill="url(#dlgS)" />
<rect x="563.70" y="73.00" width="3.80" height="55.00" fill="url(#dlgS)" />
<path d="M165.60 54.70 q0 -3.6 3.6 -3.6 H563.60 q3.6 0 3.6 3.6 V72 H165.60 Z" fill="url(#dlgT)"/>
<g filter="url(#blur2)" opacity="0.6"><rect x="168" y="55" width="170" height="10" fill="#eef4fc"/><rect x="166" y="64" width="62" height="8" fill="#9fb2ca"/><rect x="338" y="55" width="10" height="5" fill="#8fa8c8"/><rect x="352" y="55" width="12" height="5" fill="#8fa8c8"/></g>
<path d="M500.4 51 H523.1 V66.4 H503.4 Q500.4 66.4 500.4 63.4 Z" fill="url(#qG)" stroke="#6f7f93" stroke-width="0.7"/>
<path d="M523.1 51 H563.4 V63.4 Q563.4 66.4 560.4 66.4 H523.1 Z" fill="url(#xG)" stroke="#6a3a34" stroke-width="0.7"/>
<text x="508.20" y="64.00" font-size="12.40" fill="#f8fafc" textLength="7.60" lengthAdjust="spacingAndGlyphs" font-weight="bold" stroke="#46505e" stroke-width="1.0" paint-order="stroke">?</text>
<path d="M538.2 54.4 L548.8 62.9 M548.8 54.4 L538.2 62.9" stroke="#5a3a38" stroke-width="4.2" fill="none"/><path d="M538.2 54.4 L548.8 62.9 M548.8 54.4 L538.2 62.9" stroke="#f8f4f4" stroke-width="2.8" fill="none"/>
<g filter="url(#blur2)" opacity="0.7"><rect x="168" y="56" width="164" height="10" rx="4" fill="#f4f8fd"/></g>
<text x="170.20" y="64.20" font-size="9.00" fill="#10141c" textLength="158.00" lengthAdjust="spacingAndGlyphs" stroke="#10141c" stroke-width="0.22" >Custom Indicator - stochastic filtered &amp; alerts</text>
<rect x="169.80" y="73.50" width="393.70" height="226.70" fill="#f1f1f1" stroke="#5c6674" stroke-width="0.7" />
<rect x="174.40" y="91.40" width="384.60" height="189.20" fill="#ffffff" stroke="#8e9197" stroke-width="0.7" />
<path d="M175.20 91.4 V81.2 q0 -1.6 1.6 -1.6 H200.60 q1.6 0 1.6 1.6 V91.4 Z" fill="url(#tabG)" stroke="#8e9197" stroke-width="0.7"/>
<text x="179.70" y="88.70" font-size="8.00" fill="#1a1a1a" textLength="17.00" lengthAdjust="spacingAndGlyphs" stroke="#1a1a1a" stroke-width="0.22" >About</text>
<path d="M202.20 91.4 V81.2 q0 -1.6 1.6 -1.6 H234.20 q1.6 0 1.6 1.6 V91.4 Z" fill="url(#tabG)" stroke="#8e9197" stroke-width="0.7"/>
<text x="206.50" y="88.70" font-size="8.00" fill="#1a1a1a" textLength="26.50" lengthAdjust="spacingAndGlyphs" stroke="#1a1a1a" stroke-width="0.22" >Common</text>
<path d="M265.50 91.4 V81.2 q0 -1.6 1.6 -1.6 H289.40 q1.6 0 1.6 1.6 V91.4 Z" fill="url(#tabG)" stroke="#8e9197" stroke-width="0.7"/>
<text x="268.30" y="88.70" font-size="8.00" fill="#1a1a1a" textLength="19.00" lengthAdjust="spacingAndGlyphs" stroke="#1a1a1a" stroke-width="0.22" >Colors</text>
<path d="M291.00 91.4 V81.2 q0 -1.6 1.6 -1.6 H318.00 q1.6 0 1.6 1.6 V91.4 Z" fill="url(#tabG)" stroke="#8e9197" stroke-width="0.7"/>
<text x="296.00" y="88.70" font-size="8.00" fill="#1a1a1a" textLength="19.60" lengthAdjust="spacingAndGlyphs" stroke="#1a1a1a" stroke-width="0.22" >Levels</text>
<path d="M319.60 91.4 V81.2 q0 -1.6 1.6 -1.6 H362.60 q1.6 0 1.6 1.6 V91.4 Z" fill="url(#tabG)" stroke="#8e9197" stroke-width="0.7"/>
<text x="324.00" y="88.70" font-size="8.00" fill="#1a1a1a" textLength="36.80" lengthAdjust="spacingAndGlyphs" stroke="#1a1a1a" stroke-width="0.22" >Visualization</text>
<path d="M235.8 91.8 V79.6 q0 -1.6 1.6 -1.6 H264.0 q1.6 0 1.6 1.6 V91.8" fill="#ffffff" stroke="#8e9197" stroke-width="0.7"/>
<rect x="236.20" y="90.60" width="29.00" height="1.80" fill="#ffffff" />
<text x="241.40" y="87.40" font-size="8.00" fill="#1a1a1a" textLength="18.40" lengthAdjust="spacingAndGlyphs" stroke="#1a1a1a" stroke-width="0.22" >Inputs</text>
<rect x="182.40" y="98.00" width="297.00" height="175.00" fill="#ffffff" stroke="#8c9098" stroke-width="0.8" />
<rect x="182.90" y="98.50" width="296.00" height="14.90" fill="url(#hdrG)" />
<line x1="182.90" y1="113.40" x2="478.90" y2="113.40" stroke="#d5d5d8" stroke-width="0.8" />
<line x1="329.70" y1="98.60" x2="329.70" y2="113.20" stroke="#dcdde0" stroke-width="0.8" />
<text x="187.20" y="109.00" font-size="7.90" fill="#2a2a2a" textLength="24.80" lengthAdjust="spacingAndGlyphs" stroke="#2a2a2a" stroke-width="0.22" >Variable</text>
<text x="334.00" y="109.00" font-size="7.90" fill="#2a2a2a" textLength="17.20" lengthAdjust="spacingAndGlyphs" stroke="#2a2a2a" stroke-width="0.22" >Value</text>
<line x1="183.00" y1="127.21" x2="478.80" y2="127.21" stroke="#d2d2d7" stroke-width="0.7" />
<path d="M183.90 115.70 h10 v8.6 l-2.5 1.3 -2.5 -1.3 -2.5 1.3 -2.5 -1.3z" fill="url(#icI)" stroke="#4a88d0" stroke-width="0.5"/>
<rect x="184.70" y="118.30" width="8.40" height="4.40" fill="#b4d2f2" rx="0.4" />
<text x="185.40" y="122.00" font-size="4.00" fill="#16345e" textLength="7.00" lengthAdjust="spacingAndGlyphs" font-weight="bold" stroke="#16345e" stroke-width="0.22" >123</text>
<text x="196.90" y="124.30" font-size="8.00" fill="#1c1c1c" textLength="29.50" lengthAdjust="spacingAndGlyphs" stroke="#1c1c1c" stroke-width="0.22" >StoPeriod</text>
<text x="332.80" y="124.30" font-size="8.00" fill="#1c1c1c" textLength="7.60" lengthAdjust="spacingAndGlyphs" stroke="#1c1c1c" stroke-width="0.22" >32</text>
<rect x="183.00" y="127.21" width="295.80" height="13.01" fill="#ebebec" />
<line x1="183.00" y1="140.22" x2="478.80" y2="140.22" stroke="#d2d2d7" stroke-width="0.7" />
<path d="M183.90 128.71 h10 v8.6 l-2.5 1.3 -2.5 -1.3 -2.5 1.3 -2.5 -1.3z" fill="url(#icI)" stroke="#4a88d0" stroke-width="0.5"/>
<rect x="184.70" y="131.31" width="8.40" height="4.40" fill="#b4d2f2" rx="0.4" />
<text x="185.40" y="135.01" font-size="4.00" fill="#16345e" textLength="7.00" lengthAdjust="spacingAndGlyphs" font-weight="bold" stroke="#16345e" stroke-width="0.22" >123</text>
<text x="196.90" y="137.31" font-size="8.00" fill="#1c1c1c" textLength="33.80" lengthAdjust="spacingAndGlyphs" stroke="#1c1c1c" stroke-width="0.22" >StoSlowing</text>
<text x="332.80" y="137.31" font-size="8.00" fill="#1c1c1c" textLength="3.80" lengthAdjust="spacingAndGlyphs" stroke="#1c1c1c" stroke-width="0.22" >9</text>
<line x1="183.00" y1="153.23" x2="478.80" y2="153.23" stroke="#d2d2d7" stroke-width="0.7" />
<path d="M183.90 141.72 h10 v8.6 l-2.5 1.3 -2.5 -1.3 -2.5 1.3 -2.5 -1.3z" fill="url(#icI)" stroke="#4a88d0" stroke-width="0.5"/>
<rect x="184.70" y="144.32" width="8.40" height="4.40" fill="#b4d2f2" rx="0.4" />
<text x="185.40" y="148.02" font-size="4.00" fill="#16345e" textLength="7.00" lengthAdjust="spacingAndGlyphs" font-weight="bold" stroke="#16345e" stroke-width="0.22" >123</text>
<text x="196.90" y="150.32" font-size="8.00" fill="#1c1c1c" textLength="28.70" lengthAdjust="spacingAndGlyphs" stroke="#1c1c1c" stroke-width="0.22" >StoSignal</text>
<text x="332.80" y="150.32" font-size="8.00" fill="#1c1c1c" textLength="3.80" lengthAdjust="spacingAndGlyphs" stroke="#1c1c1c" stroke-width="0.22" >5</text>
<rect x="183.00" y="153.23" width="295.80" height="13.01" fill="#ebebec" />
<line x1="183.00" y1="166.24" x2="478.80" y2="166.24" stroke="#d2d2d7" stroke-width="0.7" />
<path d="M183.90 154.73 h10 v8.6 l-2.5 1.3 -2.5 -1.3 -2.5 1.3 -2.5 -1.3z" fill="url(#icI)" stroke="#4a88d0" stroke-width="0.5"/>
<rect x="184.70" y="157.33" width="8.40" height="4.40" fill="#b4d2f2" rx="0.4" />
<text x="185.40" y="161.03" font-size="4.00" fill="#16345e" textLength="7.00" lengthAdjust="spacingAndGlyphs" font-weight="bold" stroke="#16345e" stroke-width="0.22" >123</text>
<text x="196.90" y="163.33" font-size="8.00" fill="#1c1c1c" textLength="52.00" lengthAdjust="spacingAndGlyphs" stroke="#1c1c1c" stroke-width="0.22" >StoSignalMethod</text>
<text x="332.80" y="163.33" font-size="8.00" fill="#1c1c1c" textLength="36.00" lengthAdjust="spacingAndGlyphs" stroke="#1c1c1c" stroke-width="0.22" >Exponential</text>
<line x1="183.00" y1="179.25" x2="478.80" y2="179.25" stroke="#d2d2d7" stroke-width="0.7" />
<path d="M183.90 167.74 h10 v8.6 l-2.5 1.3 -2.5 -1.3 -2.5 1.3 -2.5 -1.3z" fill="url(#icD)" stroke="#58b4c4" stroke-width="0.5"/>
<text x="185.90" y="174.74" font-size="6.00" fill="#2c8a9c" textLength="6.00" lengthAdjust="spacingAndGlyphs" font-weight="bold" stroke="#2c8a9c" stroke-width="0.22" >½</text>
<text x="196.90" y="176.34" font-size="8.00" fill="#1c1c1c" textLength="13.80" lengthAdjust="spacingAndGlyphs" stroke="#1c1c1c" stroke-width="0.22" >Filter</text>
<text x="332.80" y="176.34" font-size="8.00" fill="#1c1c1c" textLength="9.80" lengthAdjust="spacingAndGlyphs" stroke="#1c1c1c" stroke-width="0.22" >5.0</text>
<rect x="183.00" y="179.25" width="295.80" height="13.01" fill="#ebebec" />
<line x1="183.00" y1="192.26" x2="478.80" y2="192.26" stroke="#d2d2d7" stroke-width="0.7" />
<path d="M183.90 180.75 h10 v8.6 l-2.5 1.3 -2.5 -1.3 -2.5 1.3 -2.5 -1.3z" fill="url(#icB)" stroke="#3cac4c" stroke-width="0.5"/>
<path d="M185.40 187.35 l2.8 -3.4 2.0 1.6 2.2 -0.6" stroke="#1c5c24" stroke-width="1.0" fill="none"/>
<text x="196.90" y="189.35" font-size="8.00" fill="#1c1c1c" textLength="89.00" lengthAdjust="spacingAndGlyphs" stroke="#1c1c1c" stroke-width="0.22" >colorChangeOnSlopeChange</text>
<text x="332.80" y="189.35" font-size="8.00" fill="#1c1c1c" textLength="14.00" lengthAdjust="spacingAndGlyphs" stroke="#1c1c1c" stroke-width="0.22" >false</text>
<line x1="183.00" y1="205.27" x2="478.80" y2="205.27" stroke="#d2d2d7" stroke-width="0.7" />
<path d="M183.90 193.76 h10 v8.6 l-2.5 1.3 -2.5 -1.3 -2.5 1.3 -2.5 -1.3z" fill="url(#icB)" stroke="#3cac4c" stroke-width="0.5"/>
<path d="M185.40 200.36 l2.8 -3.4 2.0 1.6 2.2 -0.6" stroke="#1c5c24" stroke-width="1.0" fill="none"/>
<text x="196.90" y="202.36" font-size="8.00" fill="#1c1c1c" textLength="25.00" lengthAdjust="spacingAndGlyphs" stroke="#1c1c1c" stroke-width="0.22" >alertsOn</text>
<text x="332.80" y="202.36" font-size="8.00" fill="#1c1c1c" textLength="14.00" lengthAdjust="spacingAndGlyphs" stroke="#1c1c1c" stroke-width="0.22" >false</text>
<rect x="183.00" y="205.27" width="295.80" height="13.01" fill="#ebebec" />
<line x1="183.00" y1="218.28" x2="478.80" y2="218.28" stroke="#d2d2d7" stroke-width="0.7" />
<path d="M183.90 206.77 h10 v8.6 l-2.5 1.3 -2.5 -1.3 -2.5 1.3 -2.5 -1.3z" fill="url(#icB)" stroke="#3cac4c" stroke-width="0.5"/>
<path d="M185.40 213.37 l2.8 -3.4 2.0 1.6 2.2 -0.6" stroke="#1c5c24" stroke-width="1.0" fill="none"/>
<text x="196.90" y="215.37" font-size="8.00" fill="#1c1c1c" textLength="47.00" lengthAdjust="spacingAndGlyphs" stroke="#1c1c1c" stroke-width="0.22" >alertsOnCurrent</text>
<text x="332.80" y="215.37" font-size="8.00" fill="#1c1c1c" textLength="11.60" lengthAdjust="spacingAndGlyphs" stroke="#1c1c1c" stroke-width="0.22" >true</text>
<line x1="183.00" y1="231.29" x2="478.80" y2="231.29" stroke="#d2d2d7" stroke-width="0.7" />
<path d="M183.90 219.78 h10 v8.6 l-2.5 1.3 -2.5 -1.3 -2.5 1.3 -2.5 -1.3z" fill="url(#icB)" stroke="#3cac4c" stroke-width="0.5"/>
<path d="M185.40 226.38 l2.8 -3.4 2.0 1.6 2.2 -0.6" stroke="#1c5c24" stroke-width="1.0" fill="none"/>
<text x="196.90" y="228.38" font-size="8.00" fill="#1c1c1c" textLength="44.00" lengthAdjust="spacingAndGlyphs" stroke="#1c1c1c" stroke-width="0.22" >alertsMessage</text>
<text x="332.80" y="228.38" font-size="8.00" fill="#1c1c1c" textLength="11.60" lengthAdjust="spacingAndGlyphs" stroke="#1c1c1c" stroke-width="0.22" >true</text>
<rect x="183.00" y="231.29" width="295.80" height="13.01" fill="#ebebec" />
<line x1="183.00" y1="244.30" x2="478.80" y2="244.30" stroke="#d2d2d7" stroke-width="0.7" />
<path d="M183.90 232.79 h10 v8.6 l-2.5 1.3 -2.5 -1.3 -2.5 1.3 -2.5 -1.3z" fill="url(#icB)" stroke="#3cac4c" stroke-width="0.5"/>
<path d="M185.40 239.39 l2.8 -3.4 2.0 1.6 2.2 -0.6" stroke="#1c5c24" stroke-width="1.0" fill="none"/>
<text x="196.90" y="241.39" font-size="8.00" fill="#1c1c1c" textLength="46.00" lengthAdjust="spacingAndGlyphs" stroke="#1c1c1c" stroke-width="0.22" >alertsPushNotif</text>
<text x="332.80" y="241.39" font-size="8.00" fill="#1c1c1c" textLength="14.00" lengthAdjust="spacingAndGlyphs" stroke="#1c1c1c" stroke-width="0.22" >false</text>
<line x1="183.00" y1="257.31" x2="478.80" y2="257.31" stroke="#d2d2d7" stroke-width="0.7" />
<path d="M183.90 245.80 h10 v8.6 l-2.5 1.3 -2.5 -1.3 -2.5 1.3 -2.5 -1.3z" fill="url(#icB)" stroke="#3cac4c" stroke-width="0.5"/>
<path d="M185.40 252.40 l2.8 -3.4 2.0 1.6 2.2 -0.6" stroke="#1c5c24" stroke-width="1.0" fill="none"/>
<text x="196.90" y="254.40" font-size="8.00" fill="#1c1c1c" textLength="36.60" lengthAdjust="spacingAndGlyphs" stroke="#1c1c1c" stroke-width="0.22" >alertsSound</text>
<text x="332.80" y="254.40" font-size="8.00" fill="#1c1c1c" textLength="14.00" lengthAdjust="spacingAndGlyphs" stroke="#1c1c1c" stroke-width="0.22" >false</text>
<rect x="183.00" y="257.31" width="295.80" height="13.01" fill="#ebebec" />
<line x1="183.00" y1="270.32" x2="478.80" y2="270.32" stroke="#d2d2d7" stroke-width="0.7" />
<path d="M183.90 258.81 h10 v8.6 l-2.5 1.3 -2.5 -1.3 -2.5 1.3 -2.5 -1.3z" fill="url(#icB)" stroke="#3cac4c" stroke-width="0.5"/>
<path d="M185.40 265.41 l2.8 -3.4 2.0 1.6 2.2 -0.6" stroke="#1c5c24" stroke-width="1.0" fill="none"/>
<text x="196.90" y="267.41" font-size="8.00" fill="#1c1c1c" textLength="33.00" lengthAdjust="spacingAndGlyphs" stroke="#1c1c1c" stroke-width="0.22" >alertsEmail</text>
<text x="332.80" y="267.41" font-size="8.00" fill="#1c1c1c" textLength="14.00" lengthAdjust="spacingAndGlyphs" stroke="#1c1c1c" stroke-width="0.22" >false</text>
<line x1="329.70" y1="114.00" x2="329.70" y2="272.40" stroke="#ececee" stroke-width="0.7" />
<rect x="484.60" y="237.60" width="67.20" height="13.70" fill="url(#btnG)" stroke="#707074" stroke-width="0.8" rx="1.8" />
<rect x="485.40" y="238.40" width="65.60" height="12.10" fill="none" stroke="#fafafa" stroke-width="0.6" rx="1.2" />
<text x="510.00" y="247.50" font-size="8.30" fill="#141414" textLength="15.80" lengthAdjust="spacingAndGlyphs" stroke="#141414" stroke-width="0.22" >Load</text>
<rect x="484.60" y="259.10" width="67.20" height="13.60" fill="url(#btnG)" stroke="#707074" stroke-width="0.8" rx="1.8" />
<rect x="485.40" y="259.90" width="65.60" height="12.00" fill="none" stroke="#fafafa" stroke-width="0.6" rx="1.2" />
<text x="510.00" y="268.90" font-size="8.30" fill="#141414" textLength="16.00" lengthAdjust="spacingAndGlyphs" stroke="#141414" stroke-width="0.22" >Save</text>
<rect x="404.10" y="280.60" width="47.30" height="13.60" fill="url(#btnD)" stroke="#3c96cc" stroke-width="0.8" rx="1.8" />
<rect x="405.00" y="281.50" width="45.50" height="11.80" fill="none" stroke="#4cc8f2" stroke-width="0.9" rx="1.2" />
<text x="422.60" y="290.30" font-size="8.30" fill="#141414" textLength="10.40" lengthAdjust="spacingAndGlyphs" stroke="#141414" stroke-width="0.22" >OK</text>
<rect x="456.60" y="280.60" width="47.40" height="13.60" fill="url(#btnG)" stroke="#707074" stroke-width="0.8" rx="1.8" />
<rect x="457.40" y="281.40" width="45.80" height="12.00" fill="none" stroke="#fafafa" stroke-width="0.6" rx="1.2" />
<text x="469.40" y="290.30" font-size="8.30" fill="#141414" textLength="21.80" lengthAdjust="spacingAndGlyphs" stroke="#141414" stroke-width="0.22" >Cancel</text>
<rect x="509.60" y="280.60" width="47.20" height="13.60" fill="url(#btnG)" stroke="#707074" stroke-width="0.8" rx="1.8" />
<rect x="510.40" y="281.40" width="45.60" height="12.00" fill="none" stroke="#fafafa" stroke-width="0.6" rx="1.2" />
<text x="524.00" y="290.30" font-size="8.30" fill="#141414" textLength="17.60" lengthAdjust="spacingAndGlyphs" stroke="#141414" stroke-width="0.22" >Reset</text>
</g>
<line x1="666.70" y1="0.00" x2="666.70" y2="474.40" stroke="#f2f2f4" stroke-width="0.9" />
</g></g>
</svg>
</body></html>
